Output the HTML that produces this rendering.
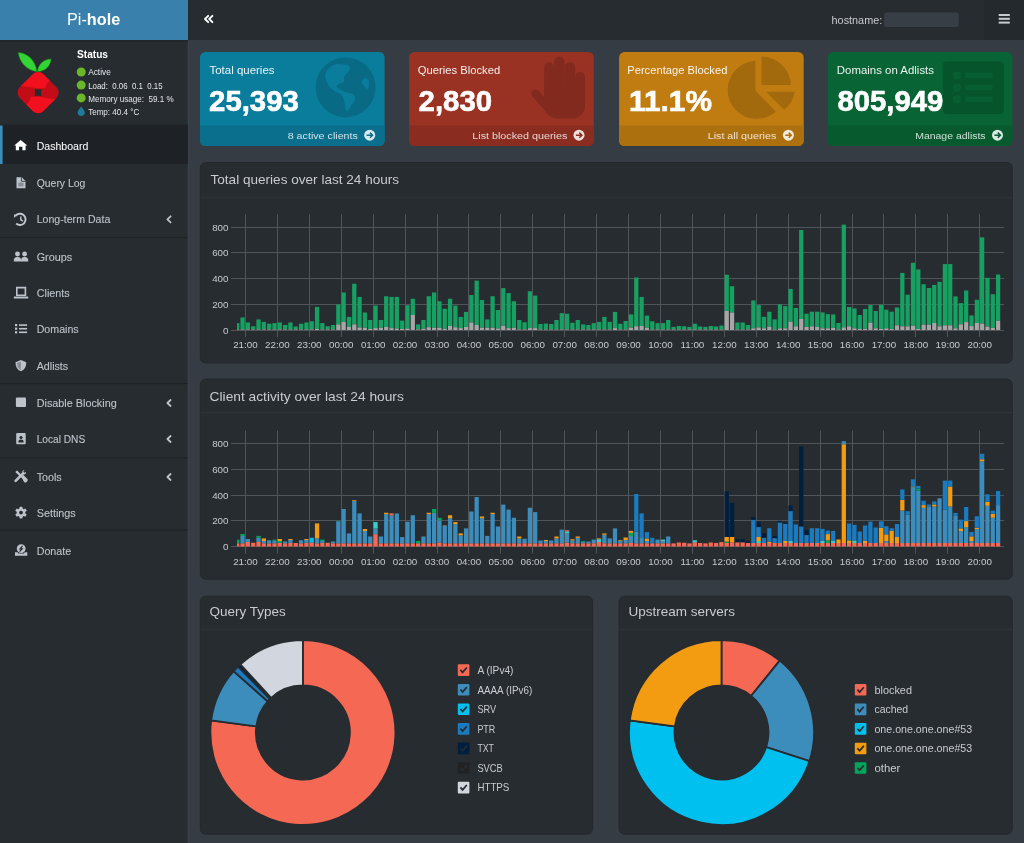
<!DOCTYPE html>
<html><head><meta charset="utf-8">
<style>
html,body{margin:0;padding:0;width:1024px;height:843px;overflow:hidden;background:#353c43;}
svg{position:absolute;left:0;top:0;display:block;will-change:transform;}
text{font-family:"Liberation Sans",sans-serif;}
.tick{font-size:9.8px;fill:#c6cacf;}
.leg{font-size:10.6px;fill:#c8ccd1;}
.side{font-size:11.7px;fill:#bcc3ca;stroke:#bcc3ca;stroke-width:0.12px;}
.ttl{font-size:13.4px;fill:#c8ccd1;}
.ct{font-size:11.4px;fill:rgba(255,255,255,0.92);}
.cn{font-size:29px;font-weight:bold;fill:#fff;stroke:#fff;stroke-width:0.6px;}
.cf{font-size:9.7px;fill:rgba(255,255,255,0.8);}
</style></head>
<body>
<svg width="1024" height="843" viewBox="0 0 1024 843">
<!-- backgrounds -->
<rect x="0" y="0" width="1024" height="843" fill="#353c43"/>
<rect x="0" y="0" width="188" height="40.4" fill="#3a80ad"/>
<rect x="188" y="0" width="836" height="40" fill="#272c30"/>
<rect x="984" y="0" width="40" height="40" fill="#24292d"/>
<rect x="0" y="40" width="188" height="803" fill="#272c30"/>
<rect x="187.6" y="40" width="2" height="803" fill="#3b4047"/>
<rect x="0" y="40.4" width="188" height="1.6" fill="#23272c"/>

<!-- header -->
<text x="67" y="25.4" font-size="16.2" fill="#fff" textLength="53.2" lengthAdjust="spacingAndGlyphs">Pi-<tspan font-weight="bold">hole</tspan></text>
<path d="M208.2,15.8 L205,19 L208.2,22.2 M212.4,15.8 L209.2,19 L212.4,22.2" fill="none" stroke="#fff" stroke-width="1.9" stroke-linecap="round" stroke-linejoin="round"/>
<text x="831.6" y="23.9" font-size="10.8" fill="#c8ccd1" textLength="50.6" lengthAdjust="spacingAndGlyphs">hostname:</text>
<rect x="884.1" y="12.4" width="74.7" height="14.5" rx="2.5" fill="#383e45"/>
<rect x="998.7" y="14" width="11.1" height="2" fill="#c8ccd1"/>
<rect x="998.7" y="17.8" width="11.1" height="2" fill="#c8ccd1"/>
<rect x="998.7" y="21.6" width="11.1" height="2" fill="#c8ccd1"/>

<!-- sidebar status -->
<g>
<!-- raspberry logo -->
<defs><clipPath id="dia"><rect x="21.35" y="75.85" width="33.5" height="33.5" rx="7.5" transform="rotate(45 38.1 92.6)"/></clipPath></defs>
<path d="M18.3,52.6 C27,53 35.5,60 36.8,71.6 C27.5,70.5 19.5,63 18.3,52.6 Z" fill="#33d433" stroke="#1d8f1d" stroke-width="0.6"/>
<path d="M51,59 C50.5,66.5 45,71.2 37.4,71.6 C38.5,63.5 44,59.3 51,59 Z" fill="#33d433" stroke="#1d8f1d" stroke-width="0.6"/>
<g clip-path="url(#dia)">
<rect x="10" y="65" width="60" height="55" fill="#c20c17"/>
<path d="M0,40 L70,40 L70,70 L50,80.5 C47.5,82.5 45.8,85 45.5,88.2 C40,88.6 34,88 29,87 C25,86.2 20,85.5 0,85 Z" fill="#f20f1e"/>
<path d="M0,40 L70,40 L70,70 L50,80.5 C47.5,82.5 45.8,85 45.5,88.2 C40,88.6 34,88 29,87 C25,86.2 20,85.5 0,85 Z" fill="#f20f1e" transform="rotate(180 38.1 92.6)"/>
</g>
<path d="M34.6,89 C37,89.6 39.2,89.6 41.6,89 C41,91.5 41,93.7 41.6,96.2 C39.2,95.6 37,95.6 34.6,96.2 C35.2,93.7 35.2,91.5 34.6,89 Z" fill="#272c30"/>
</g>
<text x="77" y="58.3" font-size="10.2" font-weight="bold" fill="#fff" textLength="31" lengthAdjust="spacingAndGlyphs">Status</text>
<circle cx="81.2" cy="72" r="4.5" fill="#6ab72a"/>
<circle cx="81.2" cy="85.1" r="4.5" fill="#6ab72a"/>
<circle cx="81.2" cy="97.9" r="4.5" fill="#6ab72a"/>
<path d="M81.2,106.6 C79,109.5 77.6,111.2 77.6,112.6 C77.6,114.6 79.2,116 81.2,116 C83.2,116 84.8,114.6 84.8,112.6 C84.8,111.2 83.4,109.5 81.2,106.6 Z" fill="#1d7c9c"/>
<text x="88.2" y="75.4" font-size="8.8" fill="#e6e8ea" textLength="22.6" lengthAdjust="spacingAndGlyphs">Active</text>
<text x="88.2" y="88.7" font-size="8.8" fill="#e6e8ea" textLength="74.4" lengthAdjust="spacingAndGlyphs" xml:space="preserve">Load:  0.06  0.1  0.15</text>
<text x="88.2" y="101.5" font-size="8.8" fill="#e6e8ea" textLength="85.5" lengthAdjust="spacingAndGlyphs" xml:space="preserve">Memory usage:  59.1 %</text>
<text x="88.2" y="114.7" font-size="8.8" fill="#e6e8ea" textLength="51" lengthAdjust="spacingAndGlyphs">Temp: 40.4 °C</text>

<!-- sidebar menu -->
<rect x="0" y="124.5" width="188" height="1" fill="#1f2327"/>
<rect x="0" y="125.5" width="188" height="38.5" fill="#1e2226"/>
<rect x="0" y="125.5" width="2.6" height="38.5" fill="#3c8dbc"/>
<rect x="0" y="237" width="188" height="1.2" fill="#1f2327"/>
<rect x="0" y="383" width="188" height="1.2" fill="#1f2327"/>
<rect x="0" y="457.3" width="188" height="1.2" fill="#1f2327"/>
<rect x="0" y="529.4" width="188" height="1.2" fill="#1f2327"/>

<text x="36.7" y="149.9" class="side" fill="#fff" style="fill:#fff" textLength="51.6" lengthAdjust="spacingAndGlyphs">Dashboard</text>
<text x="36.7" y="186.9" class="side" textLength="48.7" lengthAdjust="spacingAndGlyphs">Query Log</text>
<text x="36.7" y="222.8" class="side" textLength="73.6" lengthAdjust="spacingAndGlyphs">Long-term Data</text>
<text x="36.7" y="261.3" class="side" textLength="35.5" lengthAdjust="spacingAndGlyphs">Groups</text>
<text x="36.7" y="297.3" class="side" textLength="33" lengthAdjust="spacingAndGlyphs">Clients</text>
<text x="36.7" y="333.4" class="side" textLength="42" lengthAdjust="spacingAndGlyphs">Domains</text>
<text x="36.7" y="369.6" class="side" textLength="31.5" lengthAdjust="spacingAndGlyphs">Adlists</text>
<text x="36.7" y="407" class="side" textLength="80" lengthAdjust="spacingAndGlyphs">Disable Blocking</text>
<text x="36.7" y="443.1" class="side" textLength="48.5" lengthAdjust="spacingAndGlyphs">Local DNS</text>
<text x="36.7" y="481" class="side" textLength="25" lengthAdjust="spacingAndGlyphs">Tools</text>
<text x="36.7" y="517" class="side" textLength="39" lengthAdjust="spacingAndGlyphs">Settings</text>
<text x="36.7" y="554.7" class="side" textLength="34.5" lengthAdjust="spacingAndGlyphs">Donate</text>
<!-- chevrons -->
<path d="M170.6,216.3 L167.4,219.3 L170.6,222.3" fill="none" stroke="#bcc3ca" stroke-width="1.8" stroke-linecap="round" stroke-linejoin="round"/>
<path d="M170.6,400 L167.4,403 L170.6,406" fill="none" stroke="#bcc3ca" stroke-width="1.8" stroke-linecap="round" stroke-linejoin="round"/>
<path d="M170.6,436 L167.4,439 L170.6,442" fill="none" stroke="#bcc3ca" stroke-width="1.8" stroke-linecap="round" stroke-linejoin="round"/>
<path d="M170.6,474 L167.4,477 L170.6,480" fill="none" stroke="#bcc3ca" stroke-width="1.8" stroke-linecap="round" stroke-linejoin="round"/>
<!-- icons -->
<g fill="#fff">
<path d="M14.2,145.5 L20.7,139.9 L27.3,145.5 L25.6,145.5 L25.6,150.2 L22.4,150.2 L22.4,146.8 L19,146.8 L19,150.2 L15.8,150.2 L15.8,145.5 Z"/>
</g>
<g fill="#bcc3ca">
<path d="M16.5,177.2 L21.8,177.2 L25.5,180.9 L25.5,188.2 L16.5,188.2 Z"/>
<path d="M15.5,216 A5.6,5.6 0 1 1 16.2,223.5" fill="none" stroke="#c2c7d0" stroke-width="1.9"/>
<path d="M14,214.5 L17.5,214.5 L14,218 Z"/>
<path d="M20.8,216.5 L20.8,219.8 L23,221.2" fill="none" stroke="#c2c7d0" stroke-width="1.4"/>
<circle cx="17.5" cy="254" r="2.4"/><circle cx="24.6" cy="254" r="2.4"/>
<path d="M13.8,261.6 C13.8,258 15,257 17.5,257 C20,257 21.2,258 21.2,261.6 Z"/>
<path d="M21,261.6 C21,258 22.2,257 24.6,257 C27,257 28.3,258 28.3,261.6 Z"/>
<path d="M16,286.8 L26.2,286.8 L26.2,296 L16,296 Z M17.6,288.4 L17.6,294.4 L24.6,294.4 L24.6,288.4 Z" fill-rule="evenodd"/>
<rect x="13.8" y="296.6" width="14.5" height="1.9" rx="0.6"/>
<rect x="15" y="324" width="2.2" height="2.2"/><rect x="19" y="324.3" width="8.1" height="1.6"/>
<rect x="15" y="327.6" width="2.2" height="2.2"/><rect x="19" y="327.9" width="8.1" height="1.6"/>
<rect x="15" y="331.2" width="2.2" height="2.2"/><rect x="19" y="331.5" width="8.1" height="1.6"/>
<path d="M20.9,360 L26.3,362.2 C26.3,367 24.5,370 20.9,371.2 C17.3,370 15.5,367 15.5,362.2 Z"/>
<rect x="15.9" y="397.5" width="10.1" height="9.5" rx="1"/>
<rect x="16.2" y="433" width="9.5" height="11.2" rx="1"/>
<path d="M15.6,471.4 L17.2,470.6 L23,476.5 L21.6,477.9 L15.8,472.4 Z"/>
<path d="M21.2,476.8 L23.2,474.8 L27.2,478.8 C27.9,479.5 27.9,480.6 27.2,481.3 L26.6,481.9 C25.9,482.6 24.8,482.6 24.1,481.9 Z"/>
<path d="M14.9,479.8 L22.4,472.3 C22,470.9 23,469.8 24.5,469.9 L23.3,471.4 L24.3,472.7 L25.9,472 C26.3,473.6 25.1,474.9 23.6,474.5 L16.6,481.7 C16,482.3 15,482.3 14.6,481.8 C14.2,481.3 14.3,480.4 14.9,479.8 Z"/>
<g transform="translate(21,512.6)">
<circle r="4.3"/>
<rect x="-1.5" y="-5.9" width="3" height="11.8" rx="0.7"/>
<rect x="-1.5" y="-5.9" width="3" height="11.8" rx="0.7" transform="rotate(60)"/>
<rect x="-1.5" y="-5.9" width="3" height="11.8" rx="0.7" transform="rotate(120)"/>
</g>
<circle cx="21.2" cy="548.6" r="4.4"/>
<path d="M15,552.3 L17.6,552.3 L18.5,553.4 L23.9,553.4 L24.8,552.3 L27.3,552.3 L27.3,555.8 L15,555.8 Z"/>
</g>
<g fill="#272c30">
<rect x="18.3" y="182.6" width="5.2" height="3.8" opacity="0.35"/><path d="M21.4,177.2 L21.4,181.3 L25.5,181.3" fill="none" stroke="#272c30" stroke-width="0.8"/>
<circle cx="21" cy="512.6" r="1.9"/>
<circle cx="21" cy="437.5" r="1.6"/>
<path d="M18.3,442.4 C18.3,440.2 19.5,439.6 21,439.6 C22.5,439.6 23.7,440.2 23.7,442.4 Z"/>
<path d="M22.6,545.8 L20,548.8 L22.2,548.8 L19.6,551.6" fill="none" stroke="#272c30" stroke-width="1.2"/>
<path d="M20.9,361.4 L20.9,370 C18.5,369 16.9,366.8 16.9,363 Z" fill="#272c30" opacity="0.35"/>
</g>

<!-- small boxes -->
<g>
<rect x="200" y="52" width="184.6" height="94" rx="5.5" fill="#0a7d9c"/>
<path d="M200,125.5 L384.6,125.5 L384.6,140.5 A5.5,5.5 0 0 1 379.1,146 L205.5,146 A5.5,5.5 0 0 1 200,140.5 Z" fill="#096f8c"/>
<rect x="409.2" y="52" width="184.6" height="94" rx="5.5" fill="#993223"/>
<path d="M409.2,125.5 L593.8,125.5 L593.8,140.5 A5.5,5.5 0 0 1 588.3,146 L414.7,146 A5.5,5.5 0 0 1 409.2,140.5 Z" fill="#8a2d20"/>
<rect x="619.1" y="52" width="184.6" height="94" rx="5.5" fill="#c07c10"/>
<path d="M619.1,125.5 L803.7,125.5 L803.7,140.5 A5.5,5.5 0 0 1 798.2,146 L624.6,146 A5.5,5.5 0 0 1 619.1,140.5 Z" fill="#ad700e"/>
<rect x="827.8" y="52" width="184.6" height="94" rx="5.5" fill="#086434"/>
<path d="M827.8,125.5 L1012.4,125.5 L1012.4,140.5 A5.5,5.5 0 0 1 1006.9,146 L833.3,146 A5.5,5.5 0 0 1 827.8,140.5 Z" fill="#075a2e"/>
</g>
<!-- card icons -->
<g fill="#000" opacity="0.15">
<circle cx="345.6" cy="87.4" r="30"/>
<rect x="544.2" y="62.3" width="9.8" height="40" rx="4.9"/>
<rect x="554" y="56.6" width="10.6" height="45" rx="5.3"/>
<rect x="564.6" y="61.9" width="10.6" height="40" rx="5.3"/>
<rect x="575.2" y="71.8" width="9.8" height="35" rx="4.9"/>
<path d="M544.2,86 L585,86 L585,106 C585,113 580,118.4 572,118.4 L557,118.4 C551,118.4 548,115 545,111 Z"/>
<path d="M535.5,93.5 L548.5,108.5" stroke="#000" stroke-width="8.6" stroke-linecap="round"/>
<path d="M755.4,60.9 L755.4,90.4 L775.8,111.7 A29,29 0 1 1 755.4,60.9 Z"/>
<path d="M761.5,56.6 A29.5,29.5 0 0 1 791,85.1 L761.5,85.1 Z"/>
<path d="M765.8,91.8 L794.8,91.8 A29,29 0 0 1 784.3,109.8 Z"/>
<rect x="942.8" y="61.3" width="61.1" height="52.7" rx="4"/>
</g>
<g fill="#086434" opacity="0.7">
<circle cx="957" cy="75.5" r="4"/><rect x="965.3" y="72.8" width="27.3" height="5.3"/>
<circle cx="957" cy="87.4" r="4"/><rect x="965.3" y="84.7" width="27.3" height="5.3"/>
<circle cx="957" cy="99.2" r="4"/><rect x="965.3" y="96.5" width="27.3" height="5.3"/>
</g>
<g fill="#0a7d9c">
<path d="M325.4,77 C325,70 331,65 337,64 L346,64.4 C349,65 351,67 349.7,69 C348.5,72 345,75 343.8,77.5 C343.5,79.5 345,81 343,82.5 C340.5,83.5 337.5,84 336.2,85.8 C337.5,88.8 341,90 344,91.5 C348,92.5 353,93.5 355,96.5 C356,100 353,103 351,105.5 C349.5,108 349.8,110.8 346.5,111.5 C345,109 345.2,105 344.2,101 C343.5,97.5 342,95 339.5,93.5 C335,91.5 331.5,89 329,86 C327,83 325.6,80 325.4,77 Z"/>
<path d="M362.5,80 C365,77 368,77.5 368.8,81 C369.3,84.5 368.5,88 368,89.5 C365.5,87.5 362,85 361.8,82.5 Z"/>
</g>
<!-- card texts -->
<text x="209.5" y="73.5" class="ct" textLength="65" lengthAdjust="spacingAndGlyphs">Total queries</text>
<text x="209.1" y="110.9" class="cn" textLength="89.7" lengthAdjust="spacingAndGlyphs">25,393</text>
<text x="287.7" y="139" class="cf" textLength="70.2" lengthAdjust="spacingAndGlyphs">8 active clients</text>
<text x="417.7" y="73.5" class="ct" textLength="82.5" lengthAdjust="spacingAndGlyphs">Queries Blocked</text>
<text x="418.6" y="110.9" class="cn" textLength="73.6" lengthAdjust="spacingAndGlyphs">2,830</text>
<text x="472.3" y="139" class="cf" textLength="95" lengthAdjust="spacingAndGlyphs">List blocked queries</text>
<text x="627.2" y="73.5" class="ct" textLength="100.2" lengthAdjust="spacingAndGlyphs">Percentage Blocked</text>
<text x="629" y="110.9" class="cn" textLength="83" lengthAdjust="spacingAndGlyphs">11.1%</text>
<text x="707.7" y="139" class="cf" textLength="68.6" lengthAdjust="spacingAndGlyphs">List all queries</text>
<text x="836.8" y="73.5" class="ct" textLength="97.2" lengthAdjust="spacingAndGlyphs">Domains on Adlists</text>
<text x="837.4" y="110.9" class="cn" textLength="106" lengthAdjust="spacingAndGlyphs">805,949</text>
<text x="915.2" y="139" class="cf" textLength="70.4" lengthAdjust="spacingAndGlyphs">Manage adlists</text>
<!-- arrow circles -->
<g>
<circle cx="369.7" cy="135.2" r="5.5" fill="rgba(255,255,255,0.85)"/>
<path d="M366.6,135.2 L372.4,135.2 M370,132.6 L372.6,135.2 L370,137.8" fill="none" stroke="#096f8c" stroke-width="1.5"/>
<circle cx="579" cy="135.2" r="5.5" fill="rgba(255,255,255,0.85)"/>
<path d="M575.9,135.2 L581.7,135.2 M579.3,132.6 L581.9,135.2 L579.3,137.8" fill="none" stroke="#8a2d20" stroke-width="1.5"/>
<circle cx="788.4" cy="135.2" r="5.5" fill="rgba(255,255,255,0.85)"/>
<path d="M785.3,135.2 L791.1,135.2 M788.7,132.6 L791.3,135.2 L788.7,137.8" fill="none" stroke="#ad700e" stroke-width="1.5"/>
<circle cx="997.5" cy="135.2" r="5.5" fill="rgba(255,255,255,0.85)"/>
<path d="M994.4,135.2 L1000.2,135.2 M997.8,132.6 L1000.4,135.2 L997.8,137.8" fill="none" stroke="#075a2e" stroke-width="1.5"/>
</g>

<!-- chart boxes -->
<rect x="200.3" y="162.5" width="812" height="200.5" rx="5.5" fill="#272c30" stroke="#24282d" stroke-width="1"/>
<rect x="200.3" y="197.2" width="812" height="1" fill="#30353a"/>
<text x="210.5" y="184.2" class="ttl" textLength="188.6" lengthAdjust="spacingAndGlyphs">Total queries over last 24 hours</text>
<rect x="200.3" y="379.1" width="812" height="200.1" rx="5.5" fill="#272c30" stroke="#24282d" stroke-width="1"/>
<rect x="200.3" y="412.2" width="812" height="1" fill="#30353a"/>
<text x="209.6" y="400.7" class="ttl" textLength="194.2" lengthAdjust="spacingAndGlyphs">Client activity over last 24 hours</text>
<rect x="200.3" y="596.2" width="392.3" height="238" rx="5.5" fill="#272c30" stroke="#24282d" stroke-width="1"/>
<rect x="200.3" y="628.8" width="392.3" height="1" fill="#30353a"/>
<text x="209.5" y="616.3" class="ttl" textLength="76.3" lengthAdjust="spacingAndGlyphs">Query Types</text>
<rect x="619" y="596.2" width="393.3" height="238" rx="5.5" fill="#272c30" stroke="#24282d" stroke-width="1"/>
<rect x="619" y="628.8" width="393.3" height="1" fill="#30353a"/>
<text x="628.5" y="616.3" class="ttl" textLength="106.6" lengthAdjust="spacingAndGlyphs">Upstream servers</text>

<line x1="231" y1="330.50" x2="1004" y2="330.50" stroke="#50555a" stroke-width="1"/>
<text x="228.5" y="333.50" text-anchor="end" class="tick">0</text>
<line x1="231" y1="304.50" x2="1004" y2="304.50" stroke="#50555a" stroke-width="1"/>
<text x="228.5" y="307.78" text-anchor="end" class="tick">200</text>
<line x1="231" y1="278.50" x2="1004" y2="278.50" stroke="#50555a" stroke-width="1"/>
<text x="228.5" y="282.06" text-anchor="end" class="tick">400</text>
<line x1="231" y1="252.50" x2="1004" y2="252.50" stroke="#50555a" stroke-width="1"/>
<text x="228.5" y="256.34" text-anchor="end" class="tick">600</text>
<line x1="231" y1="227.50" x2="1004" y2="227.50" stroke="#50555a" stroke-width="1"/>
<text x="228.5" y="230.62" text-anchor="end" class="tick">800</text>
<line x1="245.50" y1="214.00" x2="245.50" y2="337.00" stroke="#50555a" stroke-width="1"/>
<text x="245.45" y="348.00" text-anchor="middle" class="tick">21:00</text>
<line x1="277.50" y1="214.00" x2="277.50" y2="337.00" stroke="#50555a" stroke-width="1"/>
<text x="277.38" y="348.00" text-anchor="middle" class="tick">22:00</text>
<line x1="309.50" y1="214.00" x2="309.50" y2="337.00" stroke="#50555a" stroke-width="1"/>
<text x="309.30" y="348.00" text-anchor="middle" class="tick">23:00</text>
<line x1="341.50" y1="214.00" x2="341.50" y2="337.00" stroke="#50555a" stroke-width="1"/>
<text x="341.23" y="348.00" text-anchor="middle" class="tick">00:00</text>
<line x1="373.50" y1="214.00" x2="373.50" y2="337.00" stroke="#50555a" stroke-width="1"/>
<text x="373.15" y="348.00" text-anchor="middle" class="tick">01:00</text>
<line x1="405.50" y1="214.00" x2="405.50" y2="337.00" stroke="#50555a" stroke-width="1"/>
<text x="405.07" y="348.00" text-anchor="middle" class="tick">02:00</text>
<line x1="437.50" y1="214.00" x2="437.50" y2="337.00" stroke="#50555a" stroke-width="1"/>
<text x="437.00" y="348.00" text-anchor="middle" class="tick">03:00</text>
<line x1="468.50" y1="214.00" x2="468.50" y2="337.00" stroke="#50555a" stroke-width="1"/>
<text x="468.92" y="348.00" text-anchor="middle" class="tick">04:00</text>
<line x1="500.50" y1="214.00" x2="500.50" y2="337.00" stroke="#50555a" stroke-width="1"/>
<text x="500.85" y="348.00" text-anchor="middle" class="tick">05:00</text>
<line x1="532.50" y1="214.00" x2="532.50" y2="337.00" stroke="#50555a" stroke-width="1"/>
<text x="532.77" y="348.00" text-anchor="middle" class="tick">06:00</text>
<line x1="564.50" y1="214.00" x2="564.50" y2="337.00" stroke="#50555a" stroke-width="1"/>
<text x="564.70" y="348.00" text-anchor="middle" class="tick">07:00</text>
<line x1="596.50" y1="214.00" x2="596.50" y2="337.00" stroke="#50555a" stroke-width="1"/>
<text x="596.62" y="348.00" text-anchor="middle" class="tick">08:00</text>
<line x1="628.50" y1="214.00" x2="628.50" y2="337.00" stroke="#50555a" stroke-width="1"/>
<text x="628.55" y="348.00" text-anchor="middle" class="tick">09:00</text>
<line x1="660.50" y1="214.00" x2="660.50" y2="337.00" stroke="#50555a" stroke-width="1"/>
<text x="660.48" y="348.00" text-anchor="middle" class="tick">10:00</text>
<line x1="692.50" y1="214.00" x2="692.50" y2="337.00" stroke="#50555a" stroke-width="1"/>
<text x="692.40" y="348.00" text-anchor="middle" class="tick">11:00</text>
<line x1="724.50" y1="214.00" x2="724.50" y2="337.00" stroke="#50555a" stroke-width="1"/>
<text x="724.33" y="348.00" text-anchor="middle" class="tick">12:00</text>
<line x1="756.50" y1="214.00" x2="756.50" y2="337.00" stroke="#50555a" stroke-width="1"/>
<text x="756.25" y="348.00" text-anchor="middle" class="tick">13:00</text>
<line x1="788.50" y1="214.00" x2="788.50" y2="337.00" stroke="#50555a" stroke-width="1"/>
<text x="788.17" y="348.00" text-anchor="middle" class="tick">14:00</text>
<line x1="820.50" y1="214.00" x2="820.50" y2="337.00" stroke="#50555a" stroke-width="1"/>
<text x="820.10" y="348.00" text-anchor="middle" class="tick">15:00</text>
<line x1="852.50" y1="214.00" x2="852.50" y2="337.00" stroke="#50555a" stroke-width="1"/>
<text x="852.03" y="348.00" text-anchor="middle" class="tick">16:00</text>
<line x1="883.50" y1="214.00" x2="883.50" y2="337.00" stroke="#50555a" stroke-width="1"/>
<text x="883.95" y="348.00" text-anchor="middle" class="tick">17:00</text>
<line x1="915.50" y1="214.00" x2="915.50" y2="337.00" stroke="#50555a" stroke-width="1"/>
<text x="915.88" y="348.00" text-anchor="middle" class="tick">18:00</text>
<line x1="947.50" y1="214.00" x2="947.50" y2="337.00" stroke="#50555a" stroke-width="1"/>
<text x="947.80" y="348.00" text-anchor="middle" class="tick">19:00</text>
<line x1="979.50" y1="214.00" x2="979.50" y2="337.00" stroke="#50555a" stroke-width="1"/>
<text x="979.72" y="348.00" text-anchor="middle" class="tick">20:00</text>
<rect x="237.00" y="323.10" width="2.35" height="6.40" fill="#16a062"/>
<rect x="237.00" y="329.50" width="2.35" height="0.50" fill="#a6a6a6"/>
<rect x="240.43" y="317.50" width="4.25" height="12.00" fill="#16a062"/>
<rect x="240.43" y="329.50" width="4.25" height="0.50" fill="#a6a6a6"/>
<rect x="245.75" y="322.50" width="4.25" height="7.00" fill="#16a062"/>
<rect x="245.75" y="329.50" width="4.25" height="0.50" fill="#a6a6a6"/>
<rect x="251.07" y="326.25" width="4.25" height="3.25" fill="#16a062"/>
<rect x="251.07" y="329.50" width="4.25" height="0.50" fill="#a6a6a6"/>
<rect x="256.39" y="319.40" width="4.25" height="10.10" fill="#16a062"/>
<rect x="256.39" y="329.50" width="4.25" height="0.50" fill="#a6a6a6"/>
<rect x="261.71" y="321.90" width="4.25" height="7.60" fill="#16a062"/>
<rect x="261.71" y="329.50" width="4.25" height="0.50" fill="#a6a6a6"/>
<rect x="267.03" y="323.75" width="4.25" height="5.75" fill="#16a062"/>
<rect x="267.03" y="329.50" width="4.25" height="0.50" fill="#a6a6a6"/>
<rect x="272.35" y="323.10" width="4.25" height="6.40" fill="#16a062"/>
<rect x="272.35" y="329.50" width="4.25" height="0.50" fill="#a6a6a6"/>
<rect x="277.67" y="322.50" width="4.25" height="7.00" fill="#16a062"/>
<rect x="277.67" y="329.50" width="4.25" height="0.50" fill="#a6a6a6"/>
<rect x="282.99" y="325.00" width="4.25" height="4.50" fill="#16a062"/>
<rect x="282.99" y="329.50" width="4.25" height="0.50" fill="#a6a6a6"/>
<rect x="288.31" y="322.50" width="4.25" height="7.00" fill="#16a062"/>
<rect x="288.31" y="329.50" width="4.25" height="0.50" fill="#a6a6a6"/>
<rect x="293.63" y="326.50" width="4.25" height="3.00" fill="#16a062"/>
<rect x="293.63" y="329.50" width="4.25" height="0.50" fill="#a6a6a6"/>
<rect x="298.95" y="323.75" width="4.25" height="5.75" fill="#16a062"/>
<rect x="298.95" y="329.50" width="4.25" height="0.50" fill="#a6a6a6"/>
<rect x="304.28" y="322.50" width="4.25" height="7.00" fill="#16a062"/>
<rect x="304.28" y="329.50" width="4.25" height="0.50" fill="#a6a6a6"/>
<rect x="309.60" y="321.25" width="4.25" height="8.25" fill="#16a062"/>
<rect x="309.60" y="329.50" width="4.25" height="0.50" fill="#a6a6a6"/>
<rect x="314.92" y="306.90" width="4.25" height="22.10" fill="#16a062"/>
<rect x="314.92" y="329.00" width="4.25" height="1.00" fill="#a6a6a6"/>
<rect x="320.24" y="323.10" width="4.25" height="6.40" fill="#16a062"/>
<rect x="320.24" y="329.50" width="4.25" height="0.50" fill="#a6a6a6"/>
<rect x="325.56" y="326.25" width="4.25" height="3.25" fill="#16a062"/>
<rect x="325.56" y="329.50" width="4.25" height="0.50" fill="#a6a6a6"/>
<rect x="330.88" y="325.00" width="4.25" height="4.50" fill="#16a062"/>
<rect x="330.88" y="329.50" width="4.25" height="0.50" fill="#a6a6a6"/>
<rect x="336.20" y="304.40" width="4.25" height="20.00" fill="#16a062"/>
<rect x="336.20" y="324.40" width="4.25" height="5.60" fill="#a6a6a6"/>
<rect x="341.52" y="292.50" width="4.25" height="29.40" fill="#16a062"/>
<rect x="341.52" y="321.90" width="4.25" height="8.10" fill="#a6a6a6"/>
<rect x="346.84" y="316.90" width="4.25" height="10.00" fill="#16a062"/>
<rect x="346.84" y="326.90" width="4.25" height="3.10" fill="#a6a6a6"/>
<rect x="352.16" y="283.75" width="4.25" height="40.65" fill="#16a062"/>
<rect x="352.16" y="324.40" width="4.25" height="5.60" fill="#a6a6a6"/>
<rect x="357.48" y="296.90" width="4.25" height="30.60" fill="#16a062"/>
<rect x="357.48" y="327.50" width="4.25" height="2.50" fill="#a6a6a6"/>
<rect x="362.80" y="312.50" width="4.25" height="15.25" fill="#16a062"/>
<rect x="362.80" y="327.75" width="4.25" height="2.25" fill="#a6a6a6"/>
<rect x="368.12" y="320.00" width="4.25" height="9.00" fill="#16a062"/>
<rect x="368.12" y="329.00" width="4.25" height="1.00" fill="#a6a6a6"/>
<rect x="373.45" y="305.60" width="4.25" height="22.50" fill="#16a062"/>
<rect x="373.45" y="328.10" width="4.25" height="1.90" fill="#a6a6a6"/>
<rect x="378.77" y="320.00" width="4.25" height="7.75" fill="#16a062"/>
<rect x="378.77" y="327.75" width="4.25" height="2.25" fill="#a6a6a6"/>
<rect x="384.09" y="296.25" width="4.25" height="30.65" fill="#16a062"/>
<rect x="384.09" y="326.90" width="4.25" height="3.10" fill="#a6a6a6"/>
<rect x="389.41" y="296.90" width="4.25" height="31.20" fill="#16a062"/>
<rect x="389.41" y="328.10" width="4.25" height="1.90" fill="#a6a6a6"/>
<rect x="394.73" y="296.90" width="4.25" height="31.60" fill="#16a062"/>
<rect x="394.73" y="328.50" width="4.25" height="1.50" fill="#a6a6a6"/>
<rect x="400.05" y="320.60" width="4.25" height="8.40" fill="#16a062"/>
<rect x="400.05" y="329.00" width="4.25" height="1.00" fill="#a6a6a6"/>
<rect x="405.37" y="305.25" width="4.25" height="23.25" fill="#16a062"/>
<rect x="405.37" y="328.50" width="4.25" height="1.50" fill="#a6a6a6"/>
<rect x="410.69" y="298.75" width="4.25" height="16.25" fill="#16a062"/>
<rect x="410.69" y="315.00" width="4.25" height="15.00" fill="#a6a6a6"/>
<rect x="416.01" y="324.40" width="4.25" height="5.00" fill="#16a062"/>
<rect x="416.01" y="329.40" width="4.25" height="0.60" fill="#a6a6a6"/>
<rect x="421.33" y="320.00" width="4.25" height="8.75" fill="#16a062"/>
<rect x="421.33" y="328.75" width="4.25" height="1.25" fill="#a6a6a6"/>
<rect x="426.65" y="296.25" width="4.25" height="31.00" fill="#16a062"/>
<rect x="426.65" y="327.25" width="4.25" height="2.75" fill="#a6a6a6"/>
<rect x="431.97" y="292.50" width="4.25" height="35.25" fill="#16a062"/>
<rect x="431.97" y="327.75" width="4.25" height="2.25" fill="#a6a6a6"/>
<rect x="437.30" y="301.25" width="4.25" height="26.50" fill="#16a062"/>
<rect x="437.30" y="327.75" width="4.25" height="2.25" fill="#a6a6a6"/>
<rect x="442.62" y="308.75" width="4.25" height="20.00" fill="#16a062"/>
<rect x="442.62" y="328.75" width="4.25" height="1.25" fill="#a6a6a6"/>
<rect x="447.94" y="298.75" width="4.25" height="27.25" fill="#16a062"/>
<rect x="447.94" y="326.00" width="4.25" height="4.00" fill="#a6a6a6"/>
<rect x="453.26" y="305.60" width="4.25" height="21.65" fill="#16a062"/>
<rect x="453.26" y="327.25" width="4.25" height="2.75" fill="#a6a6a6"/>
<rect x="458.58" y="316.90" width="4.25" height="11.20" fill="#16a062"/>
<rect x="458.58" y="328.10" width="4.25" height="1.90" fill="#a6a6a6"/>
<rect x="463.90" y="311.90" width="4.25" height="15.00" fill="#16a062"/>
<rect x="463.90" y="326.90" width="4.25" height="3.10" fill="#a6a6a6"/>
<rect x="469.22" y="295.00" width="4.25" height="27.50" fill="#16a062"/>
<rect x="469.22" y="322.50" width="4.25" height="7.50" fill="#a6a6a6"/>
<rect x="474.54" y="280.60" width="4.25" height="44.40" fill="#16a062"/>
<rect x="474.54" y="325.00" width="4.25" height="5.00" fill="#a6a6a6"/>
<rect x="479.86" y="300.00" width="4.25" height="27.75" fill="#16a062"/>
<rect x="479.86" y="327.75" width="4.25" height="2.25" fill="#a6a6a6"/>
<rect x="485.18" y="319.40" width="4.25" height="8.35" fill="#16a062"/>
<rect x="485.18" y="327.75" width="4.25" height="2.25" fill="#a6a6a6"/>
<rect x="490.50" y="296.25" width="4.25" height="31.50" fill="#16a062"/>
<rect x="490.50" y="327.75" width="4.25" height="2.25" fill="#a6a6a6"/>
<rect x="495.82" y="310.00" width="4.25" height="18.50" fill="#16a062"/>
<rect x="495.82" y="328.50" width="4.25" height="1.50" fill="#a6a6a6"/>
<rect x="501.14" y="288.10" width="4.25" height="37.50" fill="#16a062"/>
<rect x="501.14" y="325.60" width="4.25" height="4.40" fill="#a6a6a6"/>
<rect x="506.47" y="293.10" width="4.25" height="35.00" fill="#16a062"/>
<rect x="506.47" y="328.10" width="4.25" height="1.90" fill="#a6a6a6"/>
<rect x="511.79" y="301.25" width="4.25" height="26.50" fill="#16a062"/>
<rect x="511.79" y="327.75" width="4.25" height="2.25" fill="#a6a6a6"/>
<rect x="517.11" y="320.00" width="4.25" height="9.40" fill="#16a062"/>
<rect x="517.11" y="329.40" width="4.25" height="0.60" fill="#a6a6a6"/>
<rect x="522.43" y="322.25" width="4.25" height="7.15" fill="#16a062"/>
<rect x="522.43" y="329.40" width="4.25" height="0.60" fill="#a6a6a6"/>
<rect x="527.75" y="291.25" width="4.25" height="36.85" fill="#16a062"/>
<rect x="527.75" y="328.10" width="4.25" height="1.90" fill="#a6a6a6"/>
<rect x="533.07" y="295.60" width="4.25" height="32.50" fill="#16a062"/>
<rect x="533.07" y="328.10" width="4.25" height="1.90" fill="#a6a6a6"/>
<rect x="538.39" y="324.00" width="4.25" height="5.50" fill="#16a062"/>
<rect x="538.39" y="329.50" width="4.25" height="0.50" fill="#a6a6a6"/>
<rect x="543.71" y="323.50" width="4.25" height="6.00" fill="#16a062"/>
<rect x="543.71" y="329.50" width="4.25" height="0.50" fill="#a6a6a6"/>
<rect x="549.03" y="324.00" width="4.25" height="5.50" fill="#16a062"/>
<rect x="549.03" y="329.50" width="4.25" height="0.50" fill="#a6a6a6"/>
<rect x="554.35" y="320.00" width="4.25" height="9.50" fill="#16a062"/>
<rect x="554.35" y="329.50" width="4.25" height="0.50" fill="#a6a6a6"/>
<rect x="559.67" y="313.10" width="4.25" height="16.40" fill="#16a062"/>
<rect x="559.67" y="329.50" width="4.25" height="0.50" fill="#a6a6a6"/>
<rect x="564.99" y="313.75" width="4.25" height="15.75" fill="#16a062"/>
<rect x="564.99" y="329.50" width="4.25" height="0.50" fill="#a6a6a6"/>
<rect x="570.32" y="322.75" width="4.25" height="6.75" fill="#16a062"/>
<rect x="570.32" y="329.50" width="4.25" height="0.50" fill="#a6a6a6"/>
<rect x="575.64" y="320.00" width="4.25" height="9.50" fill="#16a062"/>
<rect x="575.64" y="329.50" width="4.25" height="0.50" fill="#a6a6a6"/>
<rect x="580.96" y="324.40" width="4.25" height="5.10" fill="#16a062"/>
<rect x="580.96" y="329.50" width="4.25" height="0.50" fill="#a6a6a6"/>
<rect x="586.28" y="325.00" width="4.25" height="4.50" fill="#16a062"/>
<rect x="586.28" y="329.50" width="4.25" height="0.50" fill="#a6a6a6"/>
<rect x="591.60" y="323.10" width="4.25" height="6.40" fill="#16a062"/>
<rect x="591.60" y="329.50" width="4.25" height="0.50" fill="#a6a6a6"/>
<rect x="596.92" y="321.90" width="4.25" height="7.60" fill="#16a062"/>
<rect x="596.92" y="329.50" width="4.25" height="0.50" fill="#a6a6a6"/>
<rect x="602.24" y="316.90" width="4.25" height="12.60" fill="#16a062"/>
<rect x="602.24" y="329.50" width="4.25" height="0.50" fill="#a6a6a6"/>
<rect x="607.56" y="321.90" width="4.25" height="7.60" fill="#16a062"/>
<rect x="607.56" y="329.50" width="4.25" height="0.50" fill="#a6a6a6"/>
<rect x="612.88" y="311.90" width="4.25" height="16.20" fill="#16a062"/>
<rect x="612.88" y="328.10" width="4.25" height="1.90" fill="#a6a6a6"/>
<rect x="618.20" y="323.75" width="4.25" height="5.75" fill="#16a062"/>
<rect x="618.20" y="329.50" width="4.25" height="0.50" fill="#a6a6a6"/>
<rect x="623.52" y="321.00" width="4.25" height="8.50" fill="#16a062"/>
<rect x="623.52" y="329.50" width="4.25" height="0.50" fill="#a6a6a6"/>
<rect x="628.84" y="314.40" width="4.25" height="13.35" fill="#16a062"/>
<rect x="628.84" y="327.75" width="4.25" height="2.25" fill="#a6a6a6"/>
<rect x="634.16" y="277.50" width="4.25" height="48.75" fill="#16a062"/>
<rect x="634.16" y="326.25" width="4.25" height="3.75" fill="#a6a6a6"/>
<rect x="639.49" y="296.90" width="4.25" height="29.10" fill="#16a062"/>
<rect x="639.49" y="326.00" width="4.25" height="4.00" fill="#a6a6a6"/>
<rect x="644.81" y="315.60" width="4.25" height="12.15" fill="#16a062"/>
<rect x="644.81" y="327.75" width="4.25" height="2.25" fill="#a6a6a6"/>
<rect x="650.13" y="321.25" width="4.25" height="8.25" fill="#16a062"/>
<rect x="650.13" y="329.50" width="4.25" height="0.50" fill="#a6a6a6"/>
<rect x="655.45" y="323.10" width="4.25" height="6.40" fill="#16a062"/>
<rect x="655.45" y="329.50" width="4.25" height="0.50" fill="#a6a6a6"/>
<rect x="660.77" y="323.10" width="4.25" height="6.40" fill="#16a062"/>
<rect x="660.77" y="329.50" width="4.25" height="0.50" fill="#a6a6a6"/>
<rect x="666.09" y="320.00" width="4.25" height="9.50" fill="#16a062"/>
<rect x="666.09" y="329.50" width="4.25" height="0.50" fill="#a6a6a6"/>
<rect x="671.41" y="326.90" width="4.25" height="2.60" fill="#16a062"/>
<rect x="671.41" y="329.50" width="4.25" height="0.50" fill="#a6a6a6"/>
<rect x="676.73" y="326.00" width="4.25" height="3.50" fill="#16a062"/>
<rect x="676.73" y="329.50" width="4.25" height="0.50" fill="#a6a6a6"/>
<rect x="682.05" y="326.25" width="4.25" height="3.25" fill="#16a062"/>
<rect x="682.05" y="329.50" width="4.25" height="0.50" fill="#a6a6a6"/>
<rect x="687.37" y="326.90" width="4.25" height="2.60" fill="#16a062"/>
<rect x="687.37" y="329.50" width="4.25" height="0.50" fill="#a6a6a6"/>
<rect x="692.69" y="323.75" width="4.25" height="5.75" fill="#16a062"/>
<rect x="692.69" y="329.50" width="4.25" height="0.50" fill="#a6a6a6"/>
<rect x="698.01" y="326.50" width="4.25" height="3.00" fill="#16a062"/>
<rect x="698.01" y="329.50" width="4.25" height="0.50" fill="#a6a6a6"/>
<rect x="703.34" y="326.90" width="4.25" height="2.60" fill="#16a062"/>
<rect x="703.34" y="329.50" width="4.25" height="0.50" fill="#a6a6a6"/>
<rect x="708.66" y="326.00" width="4.25" height="3.50" fill="#16a062"/>
<rect x="708.66" y="329.50" width="4.25" height="0.50" fill="#a6a6a6"/>
<rect x="713.98" y="326.50" width="4.25" height="3.00" fill="#16a062"/>
<rect x="713.98" y="329.50" width="4.25" height="0.50" fill="#a6a6a6"/>
<rect x="719.30" y="325.60" width="4.25" height="3.90" fill="#16a062"/>
<rect x="719.30" y="329.50" width="4.25" height="0.50" fill="#a6a6a6"/>
<rect x="724.62" y="274.75" width="4.25" height="36.25" fill="#16a062"/>
<rect x="724.62" y="311.00" width="4.25" height="19.00" fill="#a6a6a6"/>
<rect x="729.94" y="286.25" width="4.25" height="26.25" fill="#16a062"/>
<rect x="729.94" y="312.50" width="4.25" height="17.50" fill="#a6a6a6"/>
<rect x="735.26" y="322.50" width="4.25" height="7.00" fill="#16a062"/>
<rect x="735.26" y="329.50" width="4.25" height="0.50" fill="#a6a6a6"/>
<rect x="740.58" y="322.50" width="4.25" height="7.00" fill="#16a062"/>
<rect x="740.58" y="329.50" width="4.25" height="0.50" fill="#a6a6a6"/>
<rect x="745.90" y="325.00" width="4.25" height="4.50" fill="#16a062"/>
<rect x="745.90" y="329.50" width="4.25" height="0.50" fill="#a6a6a6"/>
<rect x="751.22" y="300.40" width="4.25" height="27.90" fill="#16a062"/>
<rect x="751.22" y="328.30" width="4.25" height="1.70" fill="#a6a6a6"/>
<rect x="756.54" y="305.10" width="4.25" height="22.30" fill="#16a062"/>
<rect x="756.54" y="327.40" width="4.25" height="2.60" fill="#a6a6a6"/>
<rect x="761.86" y="316.80" width="4.25" height="11.50" fill="#16a062"/>
<rect x="761.86" y="328.30" width="4.25" height="1.70" fill="#a6a6a6"/>
<rect x="767.19" y="311.70" width="4.25" height="14.90" fill="#16a062"/>
<rect x="767.19" y="326.60" width="4.25" height="3.40" fill="#a6a6a6"/>
<rect x="772.51" y="319.40" width="4.25" height="10.10" fill="#16a062"/>
<rect x="772.51" y="329.50" width="4.25" height="0.50" fill="#a6a6a6"/>
<rect x="777.83" y="304.40" width="4.25" height="23.90" fill="#16a062"/>
<rect x="777.83" y="328.30" width="4.25" height="1.70" fill="#a6a6a6"/>
<rect x="783.15" y="306.10" width="4.25" height="22.20" fill="#16a062"/>
<rect x="783.15" y="328.30" width="4.25" height="1.70" fill="#a6a6a6"/>
<rect x="788.47" y="288.90" width="4.25" height="32.80" fill="#16a062"/>
<rect x="788.47" y="321.70" width="4.25" height="8.30" fill="#a6a6a6"/>
<rect x="793.79" y="308.00" width="4.25" height="18.30" fill="#16a062"/>
<rect x="793.79" y="326.30" width="4.25" height="3.70" fill="#a6a6a6"/>
<rect x="799.11" y="230.00" width="4.25" height="89.00" fill="#16a062"/>
<rect x="799.11" y="319.00" width="4.25" height="11.00" fill="#a6a6a6"/>
<rect x="804.43" y="313.70" width="4.25" height="13.30" fill="#16a062"/>
<rect x="804.43" y="327.00" width="4.25" height="3.00" fill="#a6a6a6"/>
<rect x="809.75" y="311.70" width="4.25" height="14.60" fill="#16a062"/>
<rect x="809.75" y="326.30" width="4.25" height="3.70" fill="#a6a6a6"/>
<rect x="815.07" y="311.70" width="4.25" height="15.30" fill="#16a062"/>
<rect x="815.07" y="327.00" width="4.25" height="3.00" fill="#a6a6a6"/>
<rect x="820.39" y="312.40" width="4.25" height="15.90" fill="#16a062"/>
<rect x="820.39" y="328.30" width="4.25" height="1.70" fill="#a6a6a6"/>
<rect x="825.71" y="314.10" width="4.25" height="14.20" fill="#16a062"/>
<rect x="825.71" y="328.30" width="4.25" height="1.70" fill="#a6a6a6"/>
<rect x="831.03" y="314.40" width="4.25" height="13.50" fill="#16a062"/>
<rect x="831.03" y="327.90" width="4.25" height="2.10" fill="#a6a6a6"/>
<rect x="836.36" y="323.00" width="4.25" height="6.50" fill="#16a062"/>
<rect x="836.36" y="329.50" width="4.25" height="0.50" fill="#a6a6a6"/>
<rect x="841.68" y="224.65" width="4.25" height="102.75" fill="#16a062"/>
<rect x="841.68" y="327.40" width="4.25" height="2.60" fill="#a6a6a6"/>
<rect x="847.00" y="307.00" width="4.25" height="19.30" fill="#16a062"/>
<rect x="847.00" y="326.30" width="4.25" height="3.70" fill="#a6a6a6"/>
<rect x="852.32" y="308.40" width="4.25" height="19.90" fill="#16a062"/>
<rect x="852.32" y="328.30" width="4.25" height="1.70" fill="#a6a6a6"/>
<rect x="857.64" y="315.00" width="4.25" height="14.00" fill="#16a062"/>
<rect x="857.64" y="329.00" width="4.25" height="1.00" fill="#a6a6a6"/>
<rect x="862.96" y="309.00" width="4.25" height="19.80" fill="#16a062"/>
<rect x="862.96" y="328.80" width="4.25" height="1.20" fill="#a6a6a6"/>
<rect x="868.28" y="305.10" width="4.25" height="17.50" fill="#16a062"/>
<rect x="868.28" y="322.60" width="4.25" height="7.40" fill="#a6a6a6"/>
<rect x="873.60" y="311.00" width="4.25" height="17.30" fill="#16a062"/>
<rect x="873.60" y="328.30" width="4.25" height="1.70" fill="#a6a6a6"/>
<rect x="878.92" y="304.80" width="4.25" height="24.20" fill="#16a062"/>
<rect x="878.92" y="329.00" width="4.25" height="1.00" fill="#a6a6a6"/>
<rect x="884.24" y="309.70" width="4.25" height="18.60" fill="#16a062"/>
<rect x="884.24" y="328.30" width="4.25" height="1.70" fill="#a6a6a6"/>
<rect x="889.56" y="311.70" width="4.25" height="17.30" fill="#16a062"/>
<rect x="889.56" y="329.00" width="4.25" height="1.00" fill="#a6a6a6"/>
<rect x="894.88" y="307.50" width="4.25" height="17.80" fill="#16a062"/>
<rect x="894.88" y="325.30" width="4.25" height="4.70" fill="#a6a6a6"/>
<rect x="900.21" y="272.90" width="4.25" height="53.40" fill="#16a062"/>
<rect x="900.21" y="326.30" width="4.25" height="3.70" fill="#a6a6a6"/>
<rect x="905.53" y="294.70" width="4.25" height="31.60" fill="#16a062"/>
<rect x="905.53" y="326.30" width="4.25" height="3.70" fill="#a6a6a6"/>
<rect x="910.85" y="262.80" width="4.25" height="62.90" fill="#16a062"/>
<rect x="910.85" y="325.70" width="4.25" height="4.30" fill="#a6a6a6"/>
<rect x="916.17" y="269.40" width="4.25" height="59.60" fill="#16a062"/>
<rect x="916.17" y="329.00" width="4.25" height="1.00" fill="#a6a6a6"/>
<rect x="921.49" y="284.20" width="4.25" height="40.50" fill="#16a062"/>
<rect x="921.49" y="324.70" width="4.25" height="5.30" fill="#a6a6a6"/>
<rect x="926.81" y="288.00" width="4.25" height="36.70" fill="#16a062"/>
<rect x="926.81" y="324.70" width="4.25" height="5.30" fill="#a6a6a6"/>
<rect x="932.13" y="284.90" width="4.25" height="38.10" fill="#16a062"/>
<rect x="932.13" y="323.00" width="4.25" height="7.00" fill="#a6a6a6"/>
<rect x="937.45" y="281.80" width="4.25" height="44.50" fill="#16a062"/>
<rect x="937.45" y="326.30" width="4.25" height="3.70" fill="#a6a6a6"/>
<rect x="942.77" y="264.10" width="4.25" height="61.20" fill="#16a062"/>
<rect x="942.77" y="325.30" width="4.25" height="4.70" fill="#a6a6a6"/>
<rect x="948.09" y="264.10" width="4.25" height="61.20" fill="#16a062"/>
<rect x="948.09" y="325.30" width="4.25" height="4.70" fill="#a6a6a6"/>
<rect x="953.41" y="296.40" width="4.25" height="31.90" fill="#16a062"/>
<rect x="953.41" y="328.30" width="4.25" height="1.70" fill="#a6a6a6"/>
<rect x="958.73" y="303.10" width="4.25" height="21.20" fill="#16a062"/>
<rect x="958.73" y="324.30" width="4.25" height="5.70" fill="#a6a6a6"/>
<rect x="964.05" y="290.50" width="4.25" height="31.60" fill="#16a062"/>
<rect x="964.05" y="322.10" width="4.25" height="7.90" fill="#a6a6a6"/>
<rect x="969.38" y="315.40" width="4.25" height="10.70" fill="#16a062"/>
<rect x="969.38" y="326.10" width="4.25" height="3.90" fill="#a6a6a6"/>
<rect x="974.70" y="299.80" width="4.25" height="23.20" fill="#16a062"/>
<rect x="974.70" y="323.00" width="4.25" height="7.00" fill="#a6a6a6"/>
<rect x="980.02" y="237.30" width="4.25" height="86.40" fill="#16a062"/>
<rect x="980.02" y="323.70" width="4.25" height="6.30" fill="#a6a6a6"/>
<rect x="985.34" y="277.80" width="4.25" height="48.80" fill="#16a062"/>
<rect x="985.34" y="326.60" width="4.25" height="3.40" fill="#a6a6a6"/>
<rect x="990.66" y="294.20" width="4.25" height="33.70" fill="#16a062"/>
<rect x="990.66" y="327.90" width="4.25" height="2.10" fill="#a6a6a6"/>
<rect x="995.98" y="274.50" width="4.25" height="46.30" fill="#16a062"/>
<rect x="995.98" y="320.80" width="4.25" height="9.20" fill="#a6a6a6"/>
<line x1="231" y1="546.50" x2="1004" y2="546.50" stroke="#50555a" stroke-width="1"/>
<text x="228.5" y="550.00" text-anchor="end" class="tick">0</text>
<line x1="231" y1="520.50" x2="1004" y2="520.50" stroke="#50555a" stroke-width="1"/>
<text x="228.5" y="524.28" text-anchor="end" class="tick">200</text>
<line x1="231" y1="495.50" x2="1004" y2="495.50" stroke="#50555a" stroke-width="1"/>
<text x="228.5" y="498.56" text-anchor="end" class="tick">400</text>
<line x1="231" y1="469.50" x2="1004" y2="469.50" stroke="#50555a" stroke-width="1"/>
<text x="228.5" y="472.84" text-anchor="end" class="tick">600</text>
<line x1="231" y1="443.50" x2="1004" y2="443.50" stroke="#50555a" stroke-width="1"/>
<text x="228.5" y="447.12" text-anchor="end" class="tick">800</text>
<line x1="245.50" y1="430.50" x2="245.50" y2="553.50" stroke="#50555a" stroke-width="1"/>
<text x="245.45" y="564.50" text-anchor="middle" class="tick">21:00</text>
<line x1="277.50" y1="430.50" x2="277.50" y2="553.50" stroke="#50555a" stroke-width="1"/>
<text x="277.38" y="564.50" text-anchor="middle" class="tick">22:00</text>
<line x1="309.50" y1="430.50" x2="309.50" y2="553.50" stroke="#50555a" stroke-width="1"/>
<text x="309.30" y="564.50" text-anchor="middle" class="tick">23:00</text>
<line x1="341.50" y1="430.50" x2="341.50" y2="553.50" stroke="#50555a" stroke-width="1"/>
<text x="341.23" y="564.50" text-anchor="middle" class="tick">00:00</text>
<line x1="373.50" y1="430.50" x2="373.50" y2="553.50" stroke="#50555a" stroke-width="1"/>
<text x="373.15" y="564.50" text-anchor="middle" class="tick">01:00</text>
<line x1="405.50" y1="430.50" x2="405.50" y2="553.50" stroke="#50555a" stroke-width="1"/>
<text x="405.07" y="564.50" text-anchor="middle" class="tick">02:00</text>
<line x1="437.50" y1="430.50" x2="437.50" y2="553.50" stroke="#50555a" stroke-width="1"/>
<text x="437.00" y="564.50" text-anchor="middle" class="tick">03:00</text>
<line x1="468.50" y1="430.50" x2="468.50" y2="553.50" stroke="#50555a" stroke-width="1"/>
<text x="468.92" y="564.50" text-anchor="middle" class="tick">04:00</text>
<line x1="500.50" y1="430.50" x2="500.50" y2="553.50" stroke="#50555a" stroke-width="1"/>
<text x="500.85" y="564.50" text-anchor="middle" class="tick">05:00</text>
<line x1="532.50" y1="430.50" x2="532.50" y2="553.50" stroke="#50555a" stroke-width="1"/>
<text x="532.77" y="564.50" text-anchor="middle" class="tick">06:00</text>
<line x1="564.50" y1="430.50" x2="564.50" y2="553.50" stroke="#50555a" stroke-width="1"/>
<text x="564.70" y="564.50" text-anchor="middle" class="tick">07:00</text>
<line x1="596.50" y1="430.50" x2="596.50" y2="553.50" stroke="#50555a" stroke-width="1"/>
<text x="596.62" y="564.50" text-anchor="middle" class="tick">08:00</text>
<line x1="628.50" y1="430.50" x2="628.50" y2="553.50" stroke="#50555a" stroke-width="1"/>
<text x="628.55" y="564.50" text-anchor="middle" class="tick">09:00</text>
<line x1="660.50" y1="430.50" x2="660.50" y2="553.50" stroke="#50555a" stroke-width="1"/>
<text x="660.48" y="564.50" text-anchor="middle" class="tick">10:00</text>
<line x1="692.50" y1="430.50" x2="692.50" y2="553.50" stroke="#50555a" stroke-width="1"/>
<text x="692.40" y="564.50" text-anchor="middle" class="tick">11:00</text>
<line x1="724.50" y1="430.50" x2="724.50" y2="553.50" stroke="#50555a" stroke-width="1"/>
<text x="724.33" y="564.50" text-anchor="middle" class="tick">12:00</text>
<line x1="756.50" y1="430.50" x2="756.50" y2="553.50" stroke="#50555a" stroke-width="1"/>
<text x="756.25" y="564.50" text-anchor="middle" class="tick">13:00</text>
<line x1="788.50" y1="430.50" x2="788.50" y2="553.50" stroke="#50555a" stroke-width="1"/>
<text x="788.17" y="564.50" text-anchor="middle" class="tick">14:00</text>
<line x1="820.50" y1="430.50" x2="820.50" y2="553.50" stroke="#50555a" stroke-width="1"/>
<text x="820.10" y="564.50" text-anchor="middle" class="tick">15:00</text>
<line x1="852.50" y1="430.50" x2="852.50" y2="553.50" stroke="#50555a" stroke-width="1"/>
<text x="852.03" y="564.50" text-anchor="middle" class="tick">16:00</text>
<line x1="883.50" y1="430.50" x2="883.50" y2="553.50" stroke="#50555a" stroke-width="1"/>
<text x="883.95" y="564.50" text-anchor="middle" class="tick">17:00</text>
<line x1="915.50" y1="430.50" x2="915.50" y2="553.50" stroke="#50555a" stroke-width="1"/>
<text x="915.88" y="564.50" text-anchor="middle" class="tick">18:00</text>
<line x1="947.50" y1="430.50" x2="947.50" y2="553.50" stroke="#50555a" stroke-width="1"/>
<text x="947.80" y="564.50" text-anchor="middle" class="tick">19:00</text>
<line x1="979.50" y1="430.50" x2="979.50" y2="553.50" stroke="#50555a" stroke-width="1"/>
<text x="979.72" y="564.50" text-anchor="middle" class="tick">20:00</text>
<rect x="237.00" y="543.25" width="2.35" height="3.25" fill="#f56954"/>
<rect x="237.00" y="539.60" width="2.35" height="3.65" fill="#00a65a"/>
<rect x="240.43" y="543.25" width="4.25" height="3.25" fill="#f56954"/>
<rect x="240.43" y="536.00" width="4.25" height="7.25" fill="#3c8dbc"/>
<rect x="240.43" y="534.00" width="4.25" height="2.00" fill="#00a65a"/>
<rect x="245.75" y="542.00" width="4.25" height="4.50" fill="#f56954"/>
<rect x="245.75" y="539.00" width="4.25" height="3.00" fill="#3c8dbc"/>
<rect x="251.07" y="542.75" width="4.25" height="3.75" fill="#f56954"/>
<rect x="256.39" y="542.00" width="4.25" height="4.50" fill="#f56954"/>
<rect x="256.39" y="537.88" width="4.25" height="4.12" fill="#3c8dbc"/>
<rect x="256.39" y="535.90" width="4.25" height="1.98" fill="#00a65a"/>
<rect x="261.71" y="543.25" width="4.25" height="3.25" fill="#f56954"/>
<rect x="261.71" y="541.00" width="4.25" height="2.25" fill="#3c8dbc"/>
<rect x="261.71" y="538.40" width="4.25" height="2.60" fill="#f39c12"/>
<rect x="267.03" y="543.25" width="4.25" height="3.25" fill="#f56954"/>
<rect x="267.03" y="540.25" width="4.25" height="3.00" fill="#3c8dbc"/>
<rect x="272.35" y="543.25" width="4.25" height="3.25" fill="#f56954"/>
<rect x="272.35" y="540.50" width="4.25" height="2.75" fill="#3c8dbc"/>
<rect x="272.35" y="539.60" width="4.25" height="0.90" fill="#00a65a"/>
<rect x="277.67" y="542.88" width="4.25" height="3.62" fill="#f56954"/>
<rect x="277.67" y="541.00" width="4.25" height="1.88" fill="#00a65a"/>
<rect x="277.67" y="539.00" width="4.25" height="2.00" fill="#f39c12"/>
<rect x="282.99" y="543.25" width="4.25" height="3.25" fill="#f56954"/>
<rect x="282.99" y="541.50" width="4.25" height="1.75" fill="#3c8dbc"/>
<rect x="288.31" y="542.88" width="4.25" height="3.62" fill="#f56954"/>
<rect x="288.31" y="540.00" width="4.25" height="2.88" fill="#3c8dbc"/>
<rect x="288.31" y="539.00" width="4.25" height="1.00" fill="#f39c12"/>
<rect x="293.63" y="543.00" width="4.25" height="3.50" fill="#f56954"/>
<rect x="298.95" y="543.25" width="4.25" height="3.25" fill="#f56954"/>
<rect x="298.95" y="540.25" width="4.25" height="3.00" fill="#3c8dbc"/>
<rect x="304.28" y="542.88" width="4.25" height="3.62" fill="#f56954"/>
<rect x="304.28" y="540.00" width="4.25" height="2.88" fill="#3c8dbc"/>
<rect x="304.28" y="539.00" width="4.25" height="1.00" fill="#f39c12"/>
<rect x="309.60" y="542.50" width="4.25" height="4.00" fill="#f56954"/>
<rect x="309.60" y="537.75" width="4.25" height="4.75" fill="#00c0ef"/>
<rect x="314.92" y="543.25" width="4.25" height="3.25" fill="#f56954"/>
<rect x="314.92" y="538.25" width="4.25" height="5.00" fill="#3c8dbc"/>
<rect x="314.92" y="523.40" width="4.25" height="14.85" fill="#f39c12"/>
<rect x="320.24" y="542.88" width="4.25" height="3.62" fill="#f56954"/>
<rect x="320.24" y="541.00" width="4.25" height="1.88" fill="#3c8dbc"/>
<rect x="320.24" y="539.60" width="4.25" height="1.40" fill="#00a65a"/>
<rect x="325.56" y="542.75" width="4.25" height="3.75" fill="#f56954"/>
<rect x="330.88" y="543.25" width="4.25" height="3.25" fill="#f56954"/>
<rect x="330.88" y="541.50" width="4.25" height="1.75" fill="#3c8dbc"/>
<rect x="336.20" y="543.25" width="4.25" height="3.25" fill="#f56954"/>
<rect x="336.20" y="521.25" width="4.25" height="22.00" fill="#3c8dbc"/>
<rect x="336.20" y="520.90" width="4.25" height="0.35" fill="#00a65a"/>
<rect x="341.52" y="543.25" width="4.25" height="3.25" fill="#f56954"/>
<rect x="341.52" y="509.00" width="4.25" height="34.25" fill="#3c8dbc"/>
<rect x="346.84" y="543.25" width="4.25" height="3.25" fill="#f56954"/>
<rect x="346.84" y="533.40" width="4.25" height="9.85" fill="#3c8dbc"/>
<rect x="352.16" y="543.25" width="4.25" height="3.25" fill="#f56954"/>
<rect x="352.16" y="501.00" width="4.25" height="42.25" fill="#3c8dbc"/>
<rect x="352.16" y="500.25" width="4.25" height="0.75" fill="#f39c12"/>
<rect x="357.48" y="543.25" width="4.25" height="3.25" fill="#f56954"/>
<rect x="357.48" y="513.40" width="4.25" height="29.85" fill="#3c8dbc"/>
<rect x="362.80" y="543.25" width="4.25" height="3.25" fill="#f56954"/>
<rect x="362.80" y="531.00" width="4.25" height="12.25" fill="#3c8dbc"/>
<rect x="362.80" y="529.00" width="4.25" height="2.00" fill="#f39c12"/>
<rect x="368.12" y="543.25" width="4.25" height="3.25" fill="#f56954"/>
<rect x="368.12" y="536.50" width="4.25" height="6.75" fill="#3c8dbc"/>
<rect x="373.45" y="534.12" width="4.25" height="12.38" fill="#f56954"/>
<rect x="373.45" y="528.50" width="4.25" height="5.62" fill="#3c8dbc"/>
<rect x="373.45" y="522.10" width="4.25" height="6.40" fill="#39cccc"/>
<rect x="378.77" y="543.25" width="4.25" height="3.25" fill="#f56954"/>
<rect x="378.77" y="536.50" width="4.25" height="6.75" fill="#3c8dbc"/>
<rect x="384.09" y="543.25" width="4.25" height="3.25" fill="#f56954"/>
<rect x="384.09" y="514.12" width="4.25" height="29.12" fill="#3c8dbc"/>
<rect x="384.09" y="512.75" width="4.25" height="1.38" fill="#f39c12"/>
<rect x="389.41" y="543.25" width="4.25" height="3.25" fill="#f56954"/>
<rect x="389.41" y="515.38" width="4.25" height="27.88" fill="#3c8dbc"/>
<rect x="389.41" y="513.40" width="4.25" height="1.98" fill="#f56954"/>
<rect x="394.73" y="543.25" width="4.25" height="3.25" fill="#f56954"/>
<rect x="394.73" y="513.50" width="4.25" height="29.75" fill="#3c8dbc"/>
<rect x="394.73" y="513.40" width="4.25" height="0.10" fill="#00a65a"/>
<rect x="400.05" y="543.25" width="4.25" height="3.25" fill="#f56954"/>
<rect x="400.05" y="537.10" width="4.25" height="6.15" fill="#3c8dbc"/>
<rect x="405.37" y="543.25" width="4.25" height="3.25" fill="#f56954"/>
<rect x="405.37" y="521.75" width="4.25" height="21.50" fill="#3c8dbc"/>
<rect x="410.69" y="543.25" width="4.25" height="3.25" fill="#f56954"/>
<rect x="410.69" y="515.25" width="4.25" height="28.00" fill="#3c8dbc"/>
<rect x="416.01" y="543.25" width="4.25" height="3.25" fill="#f56954"/>
<rect x="416.01" y="540.90" width="4.25" height="2.35" fill="#00a65a"/>
<rect x="421.33" y="543.25" width="4.25" height="3.25" fill="#f56954"/>
<rect x="421.33" y="536.50" width="4.25" height="6.75" fill="#3c8dbc"/>
<rect x="426.65" y="543.25" width="4.25" height="3.25" fill="#f56954"/>
<rect x="426.65" y="514.12" width="4.25" height="29.12" fill="#3c8dbc"/>
<rect x="426.65" y="512.75" width="4.25" height="1.38" fill="#f39c12"/>
<rect x="431.97" y="543.25" width="4.25" height="3.25" fill="#f56954"/>
<rect x="431.97" y="512.88" width="4.25" height="30.38" fill="#3c8dbc"/>
<rect x="431.97" y="509.00" width="4.25" height="3.88" fill="#00a65a"/>
<rect x="437.30" y="542.50" width="4.25" height="4.00" fill="#f56954"/>
<rect x="437.30" y="520.38" width="4.25" height="22.12" fill="#3c8dbc"/>
<rect x="437.30" y="517.75" width="4.25" height="2.62" fill="#00a65a"/>
<rect x="442.62" y="543.25" width="4.25" height="3.25" fill="#f56954"/>
<rect x="442.62" y="525.50" width="4.25" height="17.75" fill="#3c8dbc"/>
<rect x="442.62" y="525.25" width="4.25" height="0.25" fill="#f39c12"/>
<rect x="447.94" y="543.25" width="4.25" height="3.25" fill="#f56954"/>
<rect x="447.94" y="518.25" width="4.25" height="25.00" fill="#3c8dbc"/>
<rect x="447.94" y="515.25" width="4.25" height="3.00" fill="#f39c12"/>
<rect x="453.26" y="543.25" width="4.25" height="3.25" fill="#f56954"/>
<rect x="453.26" y="524.12" width="4.25" height="19.12" fill="#3c8dbc"/>
<rect x="453.26" y="522.10" width="4.25" height="2.02" fill="#f39c12"/>
<rect x="458.58" y="543.25" width="4.25" height="3.25" fill="#f56954"/>
<rect x="458.58" y="535.38" width="4.25" height="7.88" fill="#3c8dbc"/>
<rect x="458.58" y="533.40" width="4.25" height="1.98" fill="#f39c12"/>
<rect x="463.90" y="543.25" width="4.25" height="3.25" fill="#f56954"/>
<rect x="463.90" y="528.40" width="4.25" height="14.85" fill="#3c8dbc"/>
<rect x="469.22" y="543.25" width="4.25" height="3.25" fill="#f56954"/>
<rect x="469.22" y="511.50" width="4.25" height="31.75" fill="#3c8dbc"/>
<rect x="474.54" y="543.25" width="4.25" height="3.25" fill="#f56954"/>
<rect x="474.54" y="497.10" width="4.25" height="46.15" fill="#3c8dbc"/>
<rect x="479.86" y="543.25" width="4.25" height="3.25" fill="#f56954"/>
<rect x="479.86" y="518.25" width="4.25" height="25.00" fill="#3c8dbc"/>
<rect x="479.86" y="516.50" width="4.25" height="1.75" fill="#f39c12"/>
<rect x="485.18" y="543.25" width="4.25" height="3.25" fill="#f56954"/>
<rect x="485.18" y="535.90" width="4.25" height="7.35" fill="#3c8dbc"/>
<rect x="490.50" y="543.25" width="4.25" height="3.25" fill="#f56954"/>
<rect x="490.50" y="514.12" width="4.25" height="29.12" fill="#3c8dbc"/>
<rect x="490.50" y="512.75" width="4.25" height="1.38" fill="#f39c12"/>
<rect x="495.82" y="543.25" width="4.25" height="3.25" fill="#f56954"/>
<rect x="495.82" y="526.50" width="4.25" height="16.75" fill="#3c8dbc"/>
<rect x="501.14" y="543.25" width="4.25" height="3.25" fill="#f56954"/>
<rect x="501.14" y="504.60" width="4.25" height="38.65" fill="#3c8dbc"/>
<rect x="506.47" y="543.25" width="4.25" height="3.25" fill="#f56954"/>
<rect x="506.47" y="509.60" width="4.25" height="33.65" fill="#3c8dbc"/>
<rect x="511.79" y="543.25" width="4.25" height="3.25" fill="#f56954"/>
<rect x="511.79" y="517.75" width="4.25" height="25.50" fill="#3c8dbc"/>
<rect x="517.11" y="543.25" width="4.25" height="3.25" fill="#f56954"/>
<rect x="517.11" y="538.50" width="4.25" height="4.75" fill="#3c8dbc"/>
<rect x="517.11" y="536.50" width="4.25" height="2.00" fill="#f39c12"/>
<rect x="522.43" y="543.25" width="4.25" height="3.25" fill="#f56954"/>
<rect x="522.43" y="538.75" width="4.25" height="4.50" fill="#3c8dbc"/>
<rect x="527.75" y="543.25" width="4.25" height="3.25" fill="#f56954"/>
<rect x="527.75" y="507.75" width="4.25" height="35.50" fill="#3c8dbc"/>
<rect x="533.07" y="543.25" width="4.25" height="3.25" fill="#f56954"/>
<rect x="533.07" y="512.10" width="4.25" height="31.15" fill="#3c8dbc"/>
<rect x="538.39" y="543.25" width="4.25" height="3.25" fill="#f56954"/>
<rect x="538.39" y="540.50" width="4.25" height="2.75" fill="#3c8dbc"/>
<rect x="543.71" y="543.25" width="4.25" height="3.25" fill="#f56954"/>
<rect x="543.71" y="541.00" width="4.25" height="2.25" fill="#3c8dbc"/>
<rect x="543.71" y="540.00" width="4.25" height="1.00" fill="#f39c12"/>
<rect x="549.03" y="543.25" width="4.25" height="3.25" fill="#f56954"/>
<rect x="549.03" y="540.50" width="4.25" height="2.75" fill="#3c8dbc"/>
<rect x="554.35" y="543.25" width="4.25" height="3.25" fill="#f56954"/>
<rect x="554.35" y="538.50" width="4.25" height="4.75" fill="#3c8dbc"/>
<rect x="554.35" y="536.50" width="4.25" height="2.00" fill="#f39c12"/>
<rect x="559.67" y="543.25" width="4.25" height="3.25" fill="#f56954"/>
<rect x="559.67" y="529.60" width="4.25" height="13.65" fill="#3c8dbc"/>
<rect x="564.99" y="542.50" width="4.25" height="4.00" fill="#f56954"/>
<rect x="564.99" y="533.50" width="4.25" height="9.00" fill="#3c8dbc"/>
<rect x="564.99" y="531.25" width="4.25" height="2.25" fill="#39cccc"/>
<rect x="564.99" y="530.25" width="4.25" height="1.00" fill="#f56954"/>
<rect x="570.32" y="543.25" width="4.25" height="3.25" fill="#f56954"/>
<rect x="570.32" y="540.38" width="4.25" height="2.88" fill="#3c8dbc"/>
<rect x="570.32" y="539.25" width="4.25" height="1.12" fill="#f39c12"/>
<rect x="575.64" y="543.25" width="4.25" height="3.25" fill="#f56954"/>
<rect x="575.64" y="537.88" width="4.25" height="5.38" fill="#3c8dbc"/>
<rect x="575.64" y="536.50" width="4.25" height="1.38" fill="#f39c12"/>
<rect x="580.96" y="543.25" width="4.25" height="3.25" fill="#f56954"/>
<rect x="580.96" y="541.62" width="4.25" height="1.62" fill="#3c8dbc"/>
<rect x="580.96" y="540.90" width="4.25" height="0.73" fill="#00a65a"/>
<rect x="586.28" y="543.25" width="4.25" height="3.25" fill="#f56954"/>
<rect x="586.28" y="541.50" width="4.25" height="1.75" fill="#3c8dbc"/>
<rect x="591.60" y="543.25" width="4.25" height="3.25" fill="#f56954"/>
<rect x="591.60" y="539.60" width="4.25" height="3.65" fill="#3c8dbc"/>
<rect x="596.92" y="542.00" width="4.25" height="4.50" fill="#f56954"/>
<rect x="596.92" y="539.12" width="4.25" height="2.88" fill="#39cccc"/>
<rect x="596.92" y="538.40" width="4.25" height="0.73" fill="#f39c12"/>
<rect x="602.24" y="543.25" width="4.25" height="3.25" fill="#f56954"/>
<rect x="602.24" y="534.75" width="4.25" height="8.50" fill="#3c8dbc"/>
<rect x="602.24" y="533.40" width="4.25" height="1.35" fill="#f39c12"/>
<rect x="607.56" y="543.25" width="4.25" height="3.25" fill="#f56954"/>
<rect x="607.56" y="538.40" width="4.25" height="4.85" fill="#3c8dbc"/>
<rect x="612.88" y="543.25" width="4.25" height="3.25" fill="#f56954"/>
<rect x="612.88" y="528.40" width="4.25" height="14.85" fill="#3c8dbc"/>
<rect x="618.20" y="543.25" width="4.25" height="3.25" fill="#f56954"/>
<rect x="618.20" y="541.00" width="4.25" height="2.25" fill="#3c8dbc"/>
<rect x="618.20" y="540.25" width="4.25" height="0.75" fill="#f39c12"/>
<rect x="623.52" y="543.25" width="4.25" height="3.25" fill="#f56954"/>
<rect x="623.52" y="540.00" width="4.25" height="3.25" fill="#3c8dbc"/>
<rect x="623.52" y="537.50" width="4.25" height="2.50" fill="#f39c12"/>
<rect x="628.84" y="542.88" width="4.25" height="3.62" fill="#f56954"/>
<rect x="628.84" y="536.00" width="4.25" height="6.88" fill="#3c8dbc"/>
<rect x="628.84" y="532.88" width="4.25" height="3.12" fill="#00a65a"/>
<rect x="628.84" y="530.90" width="4.25" height="1.98" fill="#f39c12"/>
<rect x="634.16" y="543.25" width="4.25" height="3.25" fill="#f56954"/>
<rect x="634.16" y="531.62" width="4.25" height="11.62" fill="#3c8dbc"/>
<rect x="634.16" y="494.00" width="4.25" height="37.62" fill="#1a7bc0"/>
<rect x="639.49" y="543.25" width="4.25" height="3.25" fill="#f56954"/>
<rect x="639.49" y="537.25" width="4.25" height="6.00" fill="#3c8dbc"/>
<rect x="639.49" y="513.40" width="4.25" height="23.85" fill="#1a7bc0"/>
<rect x="644.81" y="543.25" width="4.25" height="3.25" fill="#f56954"/>
<rect x="644.81" y="541.00" width="4.25" height="2.25" fill="#3c8dbc"/>
<rect x="644.81" y="538.50" width="4.25" height="2.50" fill="#f39c12"/>
<rect x="644.81" y="532.10" width="4.25" height="6.40" fill="#1a7bc0"/>
<rect x="650.13" y="543.25" width="4.25" height="3.25" fill="#f56954"/>
<rect x="650.13" y="537.75" width="4.25" height="5.50" fill="#1a7bc0"/>
<rect x="655.45" y="543.25" width="4.25" height="3.25" fill="#f56954"/>
<rect x="655.45" y="539.60" width="4.25" height="3.65" fill="#3c8dbc"/>
<rect x="660.77" y="543.25" width="4.25" height="3.25" fill="#f56954"/>
<rect x="660.77" y="541.00" width="4.25" height="2.25" fill="#3c8dbc"/>
<rect x="660.77" y="539.60" width="4.25" height="1.40" fill="#39cccc"/>
<rect x="666.09" y="543.25" width="4.25" height="3.25" fill="#f56954"/>
<rect x="666.09" y="536.50" width="4.25" height="6.75" fill="#3c8dbc"/>
<rect x="671.41" y="543.40" width="4.25" height="3.10" fill="#f56954"/>
<rect x="676.73" y="542.50" width="4.25" height="4.00" fill="#f56954"/>
<rect x="682.05" y="542.75" width="4.25" height="3.75" fill="#f56954"/>
<rect x="687.37" y="543.40" width="4.25" height="3.10" fill="#f56954"/>
<rect x="692.69" y="542.25" width="4.25" height="4.25" fill="#f56954"/>
<rect x="692.69" y="540.25" width="4.25" height="2.00" fill="#39cccc"/>
<rect x="698.01" y="543.00" width="4.25" height="3.50" fill="#f56954"/>
<rect x="703.34" y="543.40" width="4.25" height="3.10" fill="#f56954"/>
<rect x="708.66" y="542.50" width="4.25" height="4.00" fill="#f56954"/>
<rect x="713.98" y="543.00" width="4.25" height="3.50" fill="#f56954"/>
<rect x="719.30" y="542.10" width="4.25" height="4.40" fill="#f56954"/>
<rect x="724.62" y="542.88" width="4.25" height="3.62" fill="#f56954"/>
<rect x="724.62" y="541.62" width="4.25" height="1.25" fill="#00a65a"/>
<rect x="724.62" y="537.00" width="4.25" height="4.62" fill="#f39c12"/>
<rect x="724.62" y="491.25" width="4.25" height="45.75" fill="#001f3f"/>
<rect x="729.94" y="542.25" width="4.25" height="4.25" fill="#f56954"/>
<rect x="729.94" y="537.00" width="4.25" height="5.25" fill="#f39c12"/>
<rect x="729.94" y="502.75" width="4.25" height="34.25" fill="#001f3f"/>
<rect x="735.26" y="542.25" width="4.25" height="4.25" fill="#f56954"/>
<rect x="735.26" y="539.00" width="4.25" height="3.25" fill="#001f3f"/>
<rect x="740.58" y="542.25" width="4.25" height="4.25" fill="#f56954"/>
<rect x="740.58" y="539.00" width="4.25" height="3.25" fill="#001f3f"/>
<rect x="745.90" y="543.01" width="4.25" height="3.49" fill="#f56954"/>
<rect x="745.90" y="541.50" width="4.25" height="1.51" fill="#001f3f"/>
<rect x="751.22" y="543.01" width="4.25" height="3.49" fill="#f56954"/>
<rect x="751.22" y="519.74" width="4.25" height="23.26" fill="#1a7bc0"/>
<rect x="751.22" y="516.90" width="4.25" height="2.84" fill="#001f3f"/>
<rect x="756.54" y="543.01" width="4.25" height="3.49" fill="#f56954"/>
<rect x="756.54" y="541.01" width="4.25" height="1.99" fill="#39cccc"/>
<rect x="756.54" y="537.02" width="4.25" height="3.99" fill="#f39c12"/>
<rect x="756.54" y="527.05" width="4.25" height="9.97" fill="#1a7bc0"/>
<rect x="756.54" y="521.60" width="4.25" height="5.45" fill="#001f3f"/>
<rect x="761.86" y="543.01" width="4.25" height="3.49" fill="#f56954"/>
<rect x="761.86" y="537.69" width="4.25" height="5.32" fill="#1a7bc0"/>
<rect x="761.86" y="533.30" width="4.25" height="4.39" fill="#001f3f"/>
<rect x="767.19" y="543.01" width="4.25" height="3.49" fill="#f56954"/>
<rect x="767.19" y="541.68" width="4.25" height="1.33" fill="#f39c12"/>
<rect x="767.19" y="528.20" width="4.25" height="13.48" fill="#1a7bc0"/>
<rect x="772.51" y="543.01" width="4.25" height="3.49" fill="#f56954"/>
<rect x="772.51" y="538.09" width="4.25" height="4.92" fill="#1a7bc0"/>
<rect x="772.51" y="535.90" width="4.25" height="2.19" fill="#001f3f"/>
<rect x="777.83" y="543.01" width="4.25" height="3.49" fill="#f56954"/>
<rect x="777.83" y="522.40" width="4.25" height="20.60" fill="#1a7bc0"/>
<rect x="777.83" y="520.90" width="4.25" height="1.50" fill="#001f3f"/>
<rect x="783.15" y="543.01" width="4.25" height="3.49" fill="#f56954"/>
<rect x="783.15" y="541.01" width="4.25" height="1.99" fill="#f39c12"/>
<rect x="783.15" y="523.73" width="4.25" height="17.28" fill="#1a7bc0"/>
<rect x="783.15" y="522.60" width="4.25" height="1.13" fill="#001f3f"/>
<rect x="788.47" y="543.01" width="4.25" height="3.49" fill="#f56954"/>
<rect x="788.47" y="541.01" width="4.25" height="1.99" fill="#39cccc"/>
<rect x="788.47" y="511.10" width="4.25" height="29.91" fill="#1a7bc0"/>
<rect x="788.47" y="505.40" width="4.25" height="5.70" fill="#001f3f"/>
<rect x="793.79" y="543.01" width="4.25" height="3.49" fill="#f56954"/>
<rect x="793.79" y="524.50" width="4.25" height="18.51" fill="#1a7bc0"/>
<rect x="799.11" y="543.01" width="4.25" height="3.49" fill="#f56954"/>
<rect x="799.11" y="526.39" width="4.25" height="16.62" fill="#1a7bc0"/>
<rect x="799.11" y="446.50" width="4.25" height="79.89" fill="#001f3f"/>
<rect x="804.43" y="543.01" width="4.25" height="3.49" fill="#f56954"/>
<rect x="804.43" y="535.03" width="4.25" height="7.98" fill="#1a7bc0"/>
<rect x="804.43" y="530.20" width="4.25" height="4.83" fill="#001f3f"/>
<rect x="809.75" y="543.01" width="4.25" height="3.49" fill="#f56954"/>
<rect x="809.75" y="528.20" width="4.25" height="14.81" fill="#1a7bc0"/>
<rect x="815.07" y="543.01" width="4.25" height="3.49" fill="#f56954"/>
<rect x="815.07" y="528.20" width="4.25" height="14.81" fill="#1a7bc0"/>
<rect x="820.39" y="543.01" width="4.25" height="3.49" fill="#f56954"/>
<rect x="820.39" y="541.01" width="4.25" height="1.99" fill="#39cccc"/>
<rect x="820.39" y="528.90" width="4.25" height="12.11" fill="#1a7bc0"/>
<rect x="825.71" y="543.01" width="4.25" height="3.49" fill="#f56954"/>
<rect x="825.71" y="540.35" width="4.25" height="2.66" fill="#00a65a"/>
<rect x="825.71" y="534.10" width="4.25" height="6.25" fill="#f39c12"/>
<rect x="825.71" y="530.60" width="4.25" height="3.50" fill="#1a7bc0"/>
<rect x="831.03" y="543.01" width="4.25" height="3.49" fill="#f56954"/>
<rect x="831.03" y="541.01" width="4.25" height="1.99" fill="#39cccc"/>
<rect x="831.03" y="530.90" width="4.25" height="10.11" fill="#1a7bc0"/>
<rect x="836.36" y="543.01" width="4.25" height="3.49" fill="#f56954"/>
<rect x="836.36" y="539.50" width="4.25" height="3.51" fill="#f39c12"/>
<rect x="841.68" y="543.01" width="4.25" height="3.49" fill="#f56954"/>
<rect x="841.68" y="444.24" width="4.25" height="98.76" fill="#f39c12"/>
<rect x="841.68" y="441.15" width="4.25" height="3.09" fill="#3c8dbc"/>
<rect x="847.00" y="543.01" width="4.25" height="3.49" fill="#f56954"/>
<rect x="847.00" y="540.35" width="4.25" height="2.66" fill="#f39c12"/>
<rect x="847.00" y="523.50" width="4.25" height="16.85" fill="#1a7bc0"/>
<rect x="852.32" y="543.01" width="4.25" height="3.49" fill="#f56954"/>
<rect x="852.32" y="540.35" width="4.25" height="2.66" fill="#39cccc"/>
<rect x="852.32" y="524.90" width="4.25" height="15.45" fill="#1a7bc0"/>
<rect x="857.64" y="543.01" width="4.25" height="3.49" fill="#f56954"/>
<rect x="857.64" y="531.50" width="4.25" height="11.51" fill="#1a7bc0"/>
<rect x="862.96" y="543.01" width="4.25" height="3.49" fill="#f56954"/>
<rect x="862.96" y="541.01" width="4.25" height="1.99" fill="#f39c12"/>
<rect x="862.96" y="525.50" width="4.25" height="15.51" fill="#1a7bc0"/>
<rect x="868.28" y="543.01" width="4.25" height="3.49" fill="#f56954"/>
<rect x="868.28" y="521.60" width="4.25" height="21.41" fill="#1a7bc0"/>
<rect x="873.60" y="543.01" width="4.25" height="3.49" fill="#f56954"/>
<rect x="873.60" y="527.50" width="4.25" height="15.51" fill="#1a7bc0"/>
<rect x="878.92" y="543.01" width="4.25" height="3.49" fill="#f56954"/>
<rect x="878.92" y="527.72" width="4.25" height="15.29" fill="#f39c12"/>
<rect x="878.92" y="521.30" width="4.25" height="6.42" fill="#1a7bc0"/>
<rect x="884.24" y="543.01" width="4.25" height="3.49" fill="#f56954"/>
<rect x="884.24" y="541.01" width="4.25" height="1.99" fill="#3c8dbc"/>
<rect x="884.24" y="534.37" width="4.25" height="6.65" fill="#f39c12"/>
<rect x="884.24" y="526.20" width="4.25" height="8.17" fill="#1a7bc0"/>
<rect x="889.56" y="543.01" width="4.25" height="3.49" fill="#f56954"/>
<rect x="889.56" y="530.64" width="4.25" height="12.36" fill="#f39c12"/>
<rect x="889.56" y="528.20" width="4.25" height="2.44" fill="#1a7bc0"/>
<rect x="894.88" y="543.01" width="4.25" height="3.49" fill="#f56954"/>
<rect x="894.88" y="537.02" width="4.25" height="5.98" fill="#f39c12"/>
<rect x="894.88" y="524.00" width="4.25" height="13.02" fill="#1a7bc0"/>
<rect x="900.21" y="543.01" width="4.25" height="3.49" fill="#f56954"/>
<rect x="900.21" y="510.44" width="4.25" height="32.57" fill="#3c8dbc"/>
<rect x="900.21" y="499.80" width="4.25" height="10.63" fill="#f39c12"/>
<rect x="900.21" y="489.40" width="4.25" height="10.40" fill="#1a7bc0"/>
<rect x="905.53" y="543.01" width="4.25" height="3.49" fill="#f56954"/>
<rect x="905.53" y="514.43" width="4.25" height="28.58" fill="#3c8dbc"/>
<rect x="905.53" y="511.20" width="4.25" height="3.23" fill="#1a7bc0"/>
<rect x="910.85" y="543.01" width="4.25" height="3.49" fill="#f56954"/>
<rect x="910.85" y="487.18" width="4.25" height="55.83" fill="#3c8dbc"/>
<rect x="910.85" y="486.51" width="4.25" height="0.66" fill="#f39c12"/>
<rect x="910.85" y="479.30" width="4.25" height="7.21" fill="#1a7bc0"/>
<rect x="916.17" y="543.01" width="4.25" height="3.49" fill="#f56954"/>
<rect x="916.17" y="490.50" width="4.25" height="52.51" fill="#3c8dbc"/>
<rect x="916.17" y="488.51" width="4.25" height="1.99" fill="#00a65a"/>
<rect x="916.17" y="485.90" width="4.25" height="2.61" fill="#1a7bc0"/>
<rect x="921.49" y="543.01" width="4.25" height="3.49" fill="#f56954"/>
<rect x="921.49" y="507.78" width="4.25" height="35.23" fill="#3c8dbc"/>
<rect x="921.49" y="505.12" width="4.25" height="2.66" fill="#f39c12"/>
<rect x="921.49" y="500.70" width="4.25" height="4.42" fill="#1a7bc0"/>
<rect x="926.81" y="543.01" width="4.25" height="3.49" fill="#f56954"/>
<rect x="926.81" y="506.45" width="4.25" height="36.55" fill="#3c8dbc"/>
<rect x="926.81" y="504.50" width="4.25" height="1.95" fill="#1a7bc0"/>
<rect x="932.13" y="543.01" width="4.25" height="3.49" fill="#f56954"/>
<rect x="932.13" y="506.45" width="4.25" height="36.55" fill="#3c8dbc"/>
<rect x="932.13" y="504.46" width="4.25" height="1.99" fill="#f39c12"/>
<rect x="932.13" y="501.40" width="4.25" height="3.06" fill="#1a7bc0"/>
<rect x="937.45" y="543.01" width="4.25" height="3.49" fill="#f56954"/>
<rect x="937.45" y="498.30" width="4.25" height="44.71" fill="#3c8dbc"/>
<rect x="942.77" y="543.01" width="4.25" height="3.49" fill="#f56954"/>
<rect x="942.77" y="509.77" width="4.25" height="33.23" fill="#3c8dbc"/>
<rect x="942.77" y="480.60" width="4.25" height="29.17" fill="#1a7bc0"/>
<rect x="948.09" y="543.01" width="4.25" height="3.49" fill="#f56954"/>
<rect x="948.09" y="506.45" width="4.25" height="36.55" fill="#3c8dbc"/>
<rect x="948.09" y="486.51" width="4.25" height="19.94" fill="#f39c12"/>
<rect x="948.09" y="480.60" width="4.25" height="5.91" fill="#1a7bc0"/>
<rect x="953.41" y="543.01" width="4.25" height="3.49" fill="#f56954"/>
<rect x="953.41" y="515.76" width="4.25" height="27.25" fill="#3c8dbc"/>
<rect x="953.41" y="512.90" width="4.25" height="2.86" fill="#1a7bc0"/>
<rect x="958.73" y="543.01" width="4.25" height="3.49" fill="#f56954"/>
<rect x="958.73" y="531.04" width="4.25" height="11.96" fill="#3c8dbc"/>
<rect x="958.73" y="528.38" width="4.25" height="2.66" fill="#f39c12"/>
<rect x="958.73" y="519.60" width="4.25" height="8.78" fill="#1a7bc0"/>
<rect x="964.05" y="543.01" width="4.25" height="3.49" fill="#f56954"/>
<rect x="964.05" y="527.05" width="4.25" height="15.95" fill="#3c8dbc"/>
<rect x="964.05" y="521.07" width="4.25" height="5.98" fill="#f39c12"/>
<rect x="964.05" y="507.00" width="4.25" height="14.07" fill="#1a7bc0"/>
<rect x="969.38" y="543.01" width="4.25" height="3.49" fill="#f56954"/>
<rect x="969.38" y="541.01" width="4.25" height="1.99" fill="#3c8dbc"/>
<rect x="969.38" y="536.36" width="4.25" height="4.65" fill="#f39c12"/>
<rect x="969.38" y="531.90" width="4.25" height="4.46" fill="#1a7bc0"/>
<rect x="974.70" y="543.01" width="4.25" height="3.49" fill="#f56954"/>
<rect x="974.70" y="529.05" width="4.25" height="13.96" fill="#3c8dbc"/>
<rect x="974.70" y="527.72" width="4.25" height="1.33" fill="#f39c12"/>
<rect x="974.70" y="516.30" width="4.25" height="11.42" fill="#1a7bc0"/>
<rect x="980.02" y="543.01" width="4.25" height="3.49" fill="#f56954"/>
<rect x="980.02" y="461.26" width="4.25" height="81.75" fill="#3c8dbc"/>
<rect x="980.02" y="459.26" width="4.25" height="1.99" fill="#f39c12"/>
<rect x="980.02" y="453.80" width="4.25" height="5.46" fill="#1a7bc0"/>
<rect x="985.34" y="543.01" width="4.25" height="3.49" fill="#f56954"/>
<rect x="985.34" y="505.79" width="4.25" height="37.22" fill="#3c8dbc"/>
<rect x="985.34" y="501.80" width="4.25" height="3.99" fill="#f39c12"/>
<rect x="985.34" y="494.30" width="4.25" height="7.50" fill="#1a7bc0"/>
<rect x="990.66" y="543.01" width="4.25" height="3.49" fill="#f56954"/>
<rect x="990.66" y="517.75" width="4.25" height="25.26" fill="#3c8dbc"/>
<rect x="990.66" y="513.76" width="4.25" height="3.99" fill="#f39c12"/>
<rect x="990.66" y="510.70" width="4.25" height="3.06" fill="#1a7bc0"/>
<rect x="995.98" y="543.01" width="4.25" height="3.49" fill="#f56954"/>
<rect x="995.98" y="505.12" width="4.25" height="37.88" fill="#3c8dbc"/>
<rect x="995.98" y="491.00" width="4.25" height="14.12" fill="#1a7bc0"/>
<path d="M302.90,640.00 A92.5,92.5 0 1 1 211.19,720.43 L256.30,726.37 A47.0,47.0 0 1 0 302.90,685.50 Z" fill="#f56954" stroke="#272c30" stroke-width="1.8"/>
<path d="M211.19,720.43 A92.5,92.5 0 0 1 233.62,671.21 L267.70,701.36 A47.0,47.0 0 0 0 256.30,726.37 Z" fill="#3c8dbc" stroke="#272c30" stroke-width="1.8"/>
<path d="M233.62,671.21 A92.5,92.5 0 0 1 238.07,666.52 L269.96,698.98 A47.0,47.0 0 0 0 267.70,701.36 Z" fill="#1a7bc0" stroke="#272c30" stroke-width="1.8"/>
<path d="M238.07,666.52 A92.5,92.5 0 0 1 240.41,664.30 L271.15,697.85 A47.0,47.0 0 0 0 269.96,698.98 Z" fill="#001f3f" stroke="#272c30" stroke-width="1.8"/>
<path d="M240.41,664.30 A92.5,92.5 0 0 1 302.90,640.00 L302.90,685.50 A47.0,47.0 0 0 0 271.15,697.85 Z" fill="#d2d6de" stroke="#272c30" stroke-width="1.8"/>
<path d="M721.50,640.00 A92.5,92.5 0 0 1 779.71,660.61 L751.08,695.97 A47.0,47.0 0 0 0 721.50,685.50 Z" fill="#f56954" stroke="#272c30" stroke-width="1.8"/>
<path d="M779.71,660.61 A92.5,92.5 0 0 1 809.47,761.08 L766.20,747.02 A47.0,47.0 0 0 0 751.08,695.97 Z" fill="#3c8dbc" stroke="#272c30" stroke-width="1.8"/>
<path d="M809.47,761.08 A92.5,92.5 0 0 1 629.79,720.43 L674.90,726.37 A47.0,47.0 0 0 0 766.20,747.02 Z" fill="#00c0ef" stroke="#272c30" stroke-width="1.8"/>
<path d="M629.79,720.43 A92.5,92.5 0 0 1 721.50,640.00 L721.50,685.50 A47.0,47.0 0 0 0 674.90,726.37 Z" fill="#f39c12" stroke="#272c30" stroke-width="1.8"/>
<rect x="457.8" y="664.30" width="11.6" height="11.6" rx="1" fill="#f56954"/><path d="M460.40,669.90 L462.60,672.40 L466.80,667.50" fill="none" stroke="#272c30" stroke-width="1.7"/>
<text x="477.4" y="674.00" class="leg" textLength="36.1" lengthAdjust="spacingAndGlyphs">A (IPv4)</text>
<rect x="457.8" y="683.88" width="11.6" height="11.6" rx="1" fill="#3c8dbc"/><path d="M460.40,689.48 L462.60,691.98 L466.80,687.08" fill="none" stroke="#272c30" stroke-width="1.7"/>
<text x="477.4" y="693.58" class="leg" textLength="54.8" lengthAdjust="spacingAndGlyphs">AAAA (IPv6)</text>
<rect x="457.8" y="703.46" width="11.6" height="11.6" rx="1" fill="#00c0ef"/><path d="M460.40,709.06 L462.60,711.56 L466.80,706.66" fill="none" stroke="#272c30" stroke-width="1.7"/>
<text x="477.4" y="713.16" class="leg" textLength="18.8" lengthAdjust="spacingAndGlyphs">SRV</text>
<rect x="457.8" y="723.04" width="11.6" height="11.6" rx="1" fill="#1a7bc0"/><path d="M460.40,728.64 L462.60,731.14 L466.80,726.24" fill="none" stroke="#272c30" stroke-width="1.7"/>
<text x="477.4" y="732.74" class="leg" textLength="17.9" lengthAdjust="spacingAndGlyphs">PTR</text>
<rect x="457.8" y="742.62" width="11.6" height="11.6" rx="1" fill="#001f3f"/><path d="M460.40,748.22 L462.60,750.72 L466.80,745.82" fill="none" stroke="#272c30" stroke-width="1.7"/>
<text x="477.4" y="752.32" class="leg" textLength="16.6" lengthAdjust="spacingAndGlyphs">TXT</text>
<rect x="457.8" y="762.20" width="11.6" height="11.6" rx="1" fill="#222222"/><path d="M460.40,767.80 L462.60,770.30 L466.80,765.40" fill="none" stroke="#272c30" stroke-width="1.7"/>
<text x="477.4" y="771.90" class="leg" textLength="25.4" lengthAdjust="spacingAndGlyphs">SVCB</text>
<rect x="457.8" y="781.78" width="11.6" height="11.6" rx="1" fill="#d2d6de"/><path d="M460.40,787.38 L462.60,789.88 L466.80,784.98" fill="none" stroke="#272c30" stroke-width="1.7"/>
<text x="477.4" y="791.48" class="leg" textLength="32" lengthAdjust="spacingAndGlyphs">HTTPS</text>
<rect x="854.8" y="684.00" width="11.6" height="11.6" rx="1" fill="#f56954"/><path d="M857.40,689.60 L859.60,692.10 L863.80,687.20" fill="none" stroke="#272c30" stroke-width="1.7"/>
<text x="874.4" y="693.70" class="leg" textLength="37.6" lengthAdjust="spacingAndGlyphs">blocked</text>
<rect x="854.8" y="703.55" width="11.6" height="11.6" rx="1" fill="#3c8dbc"/><path d="M857.40,709.15 L859.60,711.65 L863.80,706.75" fill="none" stroke="#272c30" stroke-width="1.7"/>
<text x="874.4" y="713.25" class="leg" textLength="33.8" lengthAdjust="spacingAndGlyphs">cached</text>
<rect x="854.8" y="723.10" width="11.6" height="11.6" rx="1" fill="#00c0ef"/><path d="M857.40,728.70 L859.60,731.20 L863.80,726.30" fill="none" stroke="#272c30" stroke-width="1.7"/>
<text x="874.4" y="732.80" class="leg" textLength="97.8" lengthAdjust="spacingAndGlyphs">one.one.one.one#53</text>
<rect x="854.8" y="742.65" width="11.6" height="11.6" rx="1" fill="#f39c12"/><path d="M857.40,748.25 L859.60,750.75 L863.80,745.85" fill="none" stroke="#272c30" stroke-width="1.7"/>
<text x="874.4" y="752.35" class="leg" textLength="97.8" lengthAdjust="spacingAndGlyphs">one.one.one.one#53</text>
<rect x="854.8" y="762.20" width="11.6" height="11.6" rx="1" fill="#00a65a"/><path d="M857.40,767.80 L859.60,770.30 L863.80,765.40" fill="none" stroke="#272c30" stroke-width="1.7"/>
<text x="874.4" y="771.90" class="leg" textLength="26" lengthAdjust="spacingAndGlyphs">other</text>
</svg>
</body></html>
